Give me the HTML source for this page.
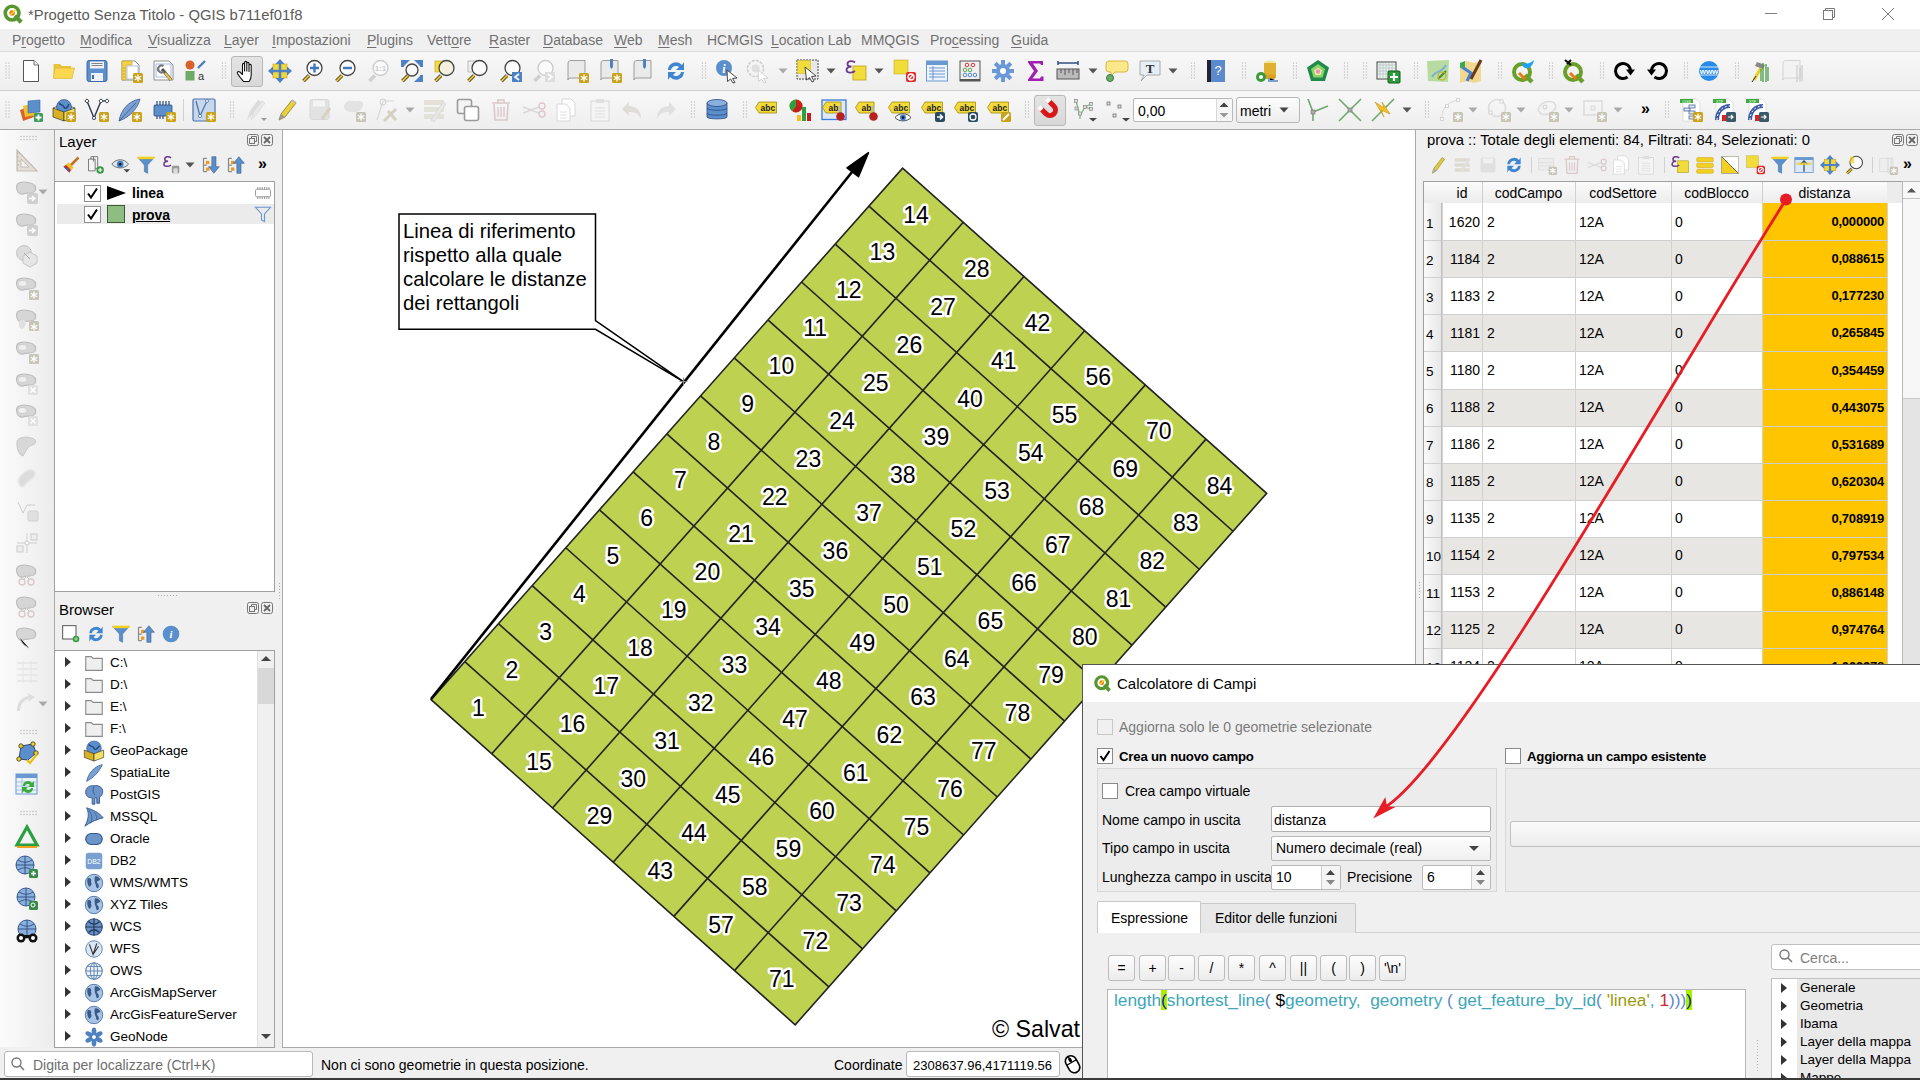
<!DOCTYPE html><html><head><meta charset="utf-8"><style>body{margin:0;width:1920px;height:1080px;position:relative;overflow:hidden;background:#f0f0f0;font-family:"Liberation Sans",sans-serif;font-size:14px}svg{overflow:visible}</style></head><body><div style="position:absolute;left:0px;top:0px;width:1920px;height:29px;background:#fff"></div><svg style="position:absolute;left:1.5px;top:3.0px" width="22" height="22" viewBox="0 0 24 24"><circle cx="11" cy="11" r="7.5" fill="none" stroke="#589632" stroke-width="4"/><path d="M14 14L21 21" stroke="#589632" stroke-width="4.5"/><circle cx="11" cy="11" r="3" fill="#ee7913"/><path d="M9 13L15 7" stroke="#f0e130" stroke-width="1.5"/></svg><div style="position:absolute;left:28px;top:8.47px;font-size:14.8px;line-height:14.8px;color:#5a5a5a;font-weight:400;white-space:pre;">*Progetto Senza Titolo - QGIS b711ef01f8</div><div style="position:absolute;left:1765px;top:13px;width:12px;height:1px;background:#808080"></div><svg style="position:absolute;left:1822px;top:7px" width="14" height="14"><rect x="1.5" y="3.5" width="9" height="9" fill="none" stroke="#7a7a7a"/><path d="M3.5 3.5V1.5H12.5V10.5H10.5" fill="none" stroke="#7a7a7a"/></svg><svg style="position:absolute;left:1881px;top:7px" width="14" height="14"><path d="M1 1L13 13M13 1L1 13" stroke="#7a7a7a" stroke-width="1"/></svg><div style="position:absolute;left:0px;top:29px;width:1920px;height:22px;background:#f0f0f0"></div><div style="position:absolute;left:0px;top:51px;width:1920px;height:1px;background:#dcdcdc"></div><div style="position:absolute;left:12px;top:32.65px;font-size:14px;line-height:14px;color:#707070;font-weight:400;white-space:pre;text-underline-offset:2px">P<u>r</u>ogetto</div><div style="position:absolute;left:80px;top:32.65px;font-size:14px;line-height:14px;color:#707070;font-weight:400;white-space:pre;text-underline-offset:2px"><u>M</u>odifica</div><div style="position:absolute;left:148px;top:32.65px;font-size:14px;line-height:14px;color:#707070;font-weight:400;white-space:pre;text-underline-offset:2px"><u>V</u>isualizza</div><div style="position:absolute;left:224px;top:32.65px;font-size:14px;line-height:14px;color:#707070;font-weight:400;white-space:pre;text-underline-offset:2px"><u>L</u>ayer</div><div style="position:absolute;left:272px;top:32.65px;font-size:14px;line-height:14px;color:#707070;font-weight:400;white-space:pre;text-underline-offset:2px"><u>I</u>mpostazioni</div><div style="position:absolute;left:367px;top:32.65px;font-size:14px;line-height:14px;color:#707070;font-weight:400;white-space:pre;text-underline-offset:2px"><u>P</u>lugins</div><div style="position:absolute;left:427px;top:32.65px;font-size:14px;line-height:14px;color:#707070;font-weight:400;white-space:pre;text-underline-offset:2px">Vett<u>o</u>re</div><div style="position:absolute;left:489px;top:32.65px;font-size:14px;line-height:14px;color:#707070;font-weight:400;white-space:pre;text-underline-offset:2px"><u>R</u>aster</div><div style="position:absolute;left:543px;top:32.65px;font-size:14px;line-height:14px;color:#707070;font-weight:400;white-space:pre;text-underline-offset:2px"><u>D</u>atabase</div><div style="position:absolute;left:614px;top:32.65px;font-size:14px;line-height:14px;color:#707070;font-weight:400;white-space:pre;text-underline-offset:2px"><u>W</u>eb</div><div style="position:absolute;left:658px;top:32.65px;font-size:14px;line-height:14px;color:#707070;font-weight:400;white-space:pre;text-underline-offset:2px"><u>M</u>esh</div><div style="position:absolute;left:707px;top:32.65px;font-size:14px;line-height:14px;color:#707070;font-weight:400;white-space:pre;text-underline-offset:2px">HCMGIS</div><div style="position:absolute;left:771px;top:32.65px;font-size:14px;line-height:14px;color:#707070;font-weight:400;white-space:pre;text-underline-offset:2px"><u>L</u>ocation Lab</div><div style="position:absolute;left:861px;top:32.65px;font-size:14px;line-height:14px;color:#707070;font-weight:400;white-space:pre;text-underline-offset:2px">MMQGIS</div><div style="position:absolute;left:930px;top:32.65px;font-size:14px;line-height:14px;color:#707070;font-weight:400;white-space:pre;text-underline-offset:2px">Pro<u>c</u>essing</div><div style="position:absolute;left:1011px;top:32.65px;font-size:14px;line-height:14px;color:#707070;font-weight:400;white-space:pre;text-underline-offset:2px"><u>G</u>uida</div><div style="position:absolute;left:0px;top:52px;width:1920px;height:38px;background:linear-gradient(#f8f8f8,#eeeeee)"></div><div style="position:absolute;left:0px;top:90px;width:1920px;height:1px;background:#d0d0d0"></div><div style="position:absolute;left:0px;top:91px;width:1920px;height:38px;background:linear-gradient(#f8f8f8,#eeeeee)"></div><div style="position:absolute;left:0px;top:129px;width:1920px;height:1px;background:#a9a9a9"></div><div style="position:absolute;left:0px;top:130px;width:54px;height:917px;background:linear-gradient(90deg,#fbfbfb,#ececec)"></div><div style="position:absolute;left:54px;top:130px;width:1px;height:917px;background:#a8a8a8"></div><div style="position:absolute;left:231px;top:56px;width:32px;height:31px;background:linear-gradient(#e4e4e4,#d8d8d8);border:1px solid #b8b8b8;border-radius:3px;box-sizing:border-box"></div><svg style="position:absolute;left:18.8px;top:59.0px" width="24" height="24" viewBox="0 0 24 24"><path d="M4.5 1.5H15L19.5 6V22.5H4.5Z" fill="#fff" stroke="#555" stroke-width="1"/><path d="M15 1.5V6H19.5" fill="#eee" stroke="#555" stroke-width="0.8"/></svg><svg style="position:absolute;left:51.5px;top:59.0px" width="24" height="24" viewBox="0 0 24 24"><path d="M1.5 5H8L10 7H19V19H1.5Z" fill="#e8c23a"/><path d="M3 9H22.5L20 19.5H1.5Z" fill="#fcd850" stroke="#d8b030" stroke-width="0.6"/></svg><svg style="position:absolute;left:85.0px;top:59.0px" width="24" height="24" viewBox="0 0 24 24"><rect x="2" y="1.5" width="20" height="21" rx="2" fill="#5d8fcc" stroke="#3d6aa5"/><rect x="5" y="2.5" width="14" height="7" fill="#eef2f8"/><path d="M6.5 4.5H17.5M6.5 6.5H17.5" stroke="#555" stroke-width="0.7"/><rect x="6" y="14" width="12" height="8" fill="#eef2f8"/><rect x="7" y="16" width="2" height="4" fill="#3d6aa5"/></svg><svg style="position:absolute;left:118.5px;top:59.0px" width="24" height="24" viewBox="0 0 24 24"><path d="M3 2H16L20 6V21H3Z" fill="#fff" stroke="#777" stroke-width="0.8"/><path d="M8 7H19V20H8Z" fill="#fff" stroke="#8eaadd" stroke-width="0.7"/><path d="M3 2H13V6H7V21H3Z" fill="#f4d24a" stroke="#c8a020" stroke-width="0.6"/><path d="M4 9H6M4 12H6M4 15H6M4 18H6" stroke="#b08a10" stroke-width="0.6"/><rect x="14" y="14" width="10" height="10" rx="1.5" fill="#c9a21c"/><path d="M19 15.5V22.5M15.8 17.2L22.2 20.8M15.8 20.8L22.2 17.2" stroke="#fff" stroke-width="1.3"/></svg><svg style="position:absolute;left:151.5px;top:59.0px" width="24" height="24" viewBox="0 0 24 24"><path d="M2 2H17L21 6V21H2Z" fill="#fff" stroke="#777" stroke-width="0.8"/><rect x="4" y="5" width="15" height="13" fill="none" stroke="#8eaadd" stroke-width="0.8"/><path d="M10 10L19 21" stroke="#555" stroke-width="3.2"/><path d="M13 14L19 21" stroke="#e8c040" stroke-width="2.2"/><path d="M11.5 7A3.5 3.5 0 1 0 12 12.5" fill="none" stroke="#777" stroke-width="2.2"/></svg><svg style="position:absolute;left:184.0px;top:59.0px" width="24" height="24" viewBox="0 0 24 24"><circle cx="6" cy="6" r="4.5" fill="#d8622a"/><path d="M14 9L21 2" stroke="#4f7fc0" stroke-width="2.4"/><rect x="1.5" y="12" width="9" height="9.5" fill="#6faa68"/><text x="17" y="21" font-size="11" text-anchor="middle" fill="#333" font-family="Liberation Sans">a</text></svg><svg style="position:absolute;left:235.0px;top:59.0px" width="24" height="24" viewBox="0 0 24 24"><path d="M8.5 22.5C6.5 20 3.5 16.5 2.5 14.5C1.8 13 3.5 11.8 4.8 13L7.5 15.5V5.5C7.5 4 9.6 4 9.6 5.5V12V3.5C9.6 2 11.8 2 11.8 3.5V12V4.5C11.8 3 14 3 14 4.5V12.5V6.5C14 5 16.2 5 16.2 6.5V16C16.2 19 15.2 21 14.2 22.5Z" fill="#fff" stroke="#111" stroke-width="1.1" stroke-linejoin="round"/></svg><svg style="position:absolute;left:268.0px;top:59.0px" width="24" height="24" viewBox="0 0 24 24"><rect x="5" y="5" width="14" height="14" fill="#f2d83a" stroke="#b8a020" stroke-width="0.6"/><g fill="#4f82c4"><path d="M12 0L16.5 5H7.5Z"/><path d="M12 24L16.5 19H7.5Z"/><path d="M0 12L5 7.5V16.5Z"/><path d="M24 12L19 7.5V16.5Z"/></g><path d="M12 4V20M4 12H20" stroke="#4f82c4" stroke-width="2.5"/></svg><svg style="position:absolute;left:301.0px;top:59.0px" width="24" height="24" viewBox="0 0 24 24"><path d="M2.5 22L8 16.5" stroke="#333" stroke-width="3.6"/><path d="M2.5 22L8 16.5" stroke="#e8c020" stroke-width="2"/><circle cx="13.5" cy="9" r="7.5" fill="#fafafa" stroke="#444" stroke-width="1.3"/><path d="M13.5 4.5V13.5M9 9H18" stroke="#3f78c0" stroke-width="2.4"/></svg><svg style="position:absolute;left:334.0px;top:59.0px" width="24" height="24" viewBox="0 0 24 24"><path d="M2.5 22L8 16.5" stroke="#333" stroke-width="3.6"/><path d="M2.5 22L8 16.5" stroke="#e8c020" stroke-width="2"/><circle cx="13.5" cy="9" r="7.5" fill="#fafafa" stroke="#444" stroke-width="1.3"/><path d="M9 9H18" stroke="#3f78c0" stroke-width="2.4"/></svg><svg style="position:absolute;left:367.0px;top:59.0px" width="24" height="24" viewBox="0 0 24 24"><path d="M2.5 22L8 16.5" stroke="#d0d0d0" stroke-width="3.6"/><circle cx="13.5" cy="9" r="7.5" fill="#fafafa" stroke="#ccc" stroke-width="1.3"/><text x="13.5" y="12" font-size="8" font-weight="700" text-anchor="middle" fill="#ccc" font-family="Liberation Sans">1:1</text></svg><svg style="position:absolute;left:400.0px;top:59.0px" width="24" height="24" viewBox="0 0 24 24"><g fill="#4f82c4"><path d="M3 1H10L3 8Z"/><path d="M21 1H14L21 8Z"/><path d="M21 23H14L21 16Z"/><rect x="1" y="1" width="3" height="7"/><rect x="20" y="1" width="3" height="7"/><rect x="20" y="16" width="3" height="7"/></g><path d="M2.5 22L8 16.5" stroke="#333" stroke-width="3.6"/><path d="M2.5 22L8 16.5" stroke="#e8c020" stroke-width="2"/><circle cx="12" cy="11" r="6" fill="#fafafa" stroke="#444" stroke-width="1.3"/></svg><svg style="position:absolute;left:433.0px;top:59.0px" width="24" height="24" viewBox="0 0 24 24"><rect x="2" y="2" width="9" height="11" fill="#f4dc3a" stroke="#b8a020" stroke-width="0.6"/><path d="M2.5 22L8 16.5" stroke="#333" stroke-width="3.6"/><path d="M2.5 22L8 16.5" stroke="#e8c020" stroke-width="2"/><circle cx="13.5" cy="9" r="7.5" fill="#f4f0e0" stroke="#444" stroke-width="1.3"/></svg><svg style="position:absolute;left:466.0px;top:59.0px" width="24" height="24" viewBox="0 0 24 24"><rect x="2" y="2" width="9" height="11" fill="#eee" stroke="#999" stroke-width="0.6"/><path d="M2.5 22L8 16.5" stroke="#333" stroke-width="3.6"/><path d="M2.5 22L8 16.5" stroke="#e8c020" stroke-width="2"/><circle cx="13.5" cy="9" r="7.5" fill="#fafafa" stroke="#444" stroke-width="1.3"/></svg><svg style="position:absolute;left:499.0px;top:59.0px" width="24" height="24" viewBox="0 0 24 24"><path d="M2.5 22L8 16.5" stroke="#333" stroke-width="3.6"/><path d="M2.5 22L8 16.5" stroke="#e8c020" stroke-width="2"/><circle cx="13.5" cy="9" r="7.5" fill="#fafafa" stroke="#444" stroke-width="1.3"/><rect x="13" y="13" width="10" height="10" fill="#4f82c4"/><path d="M20 15L16 18L20 21" fill="none" stroke="#fff" stroke-width="1.6"/></svg><svg style="position:absolute;left:532.0px;top:59.0px" width="24" height="24" viewBox="0 0 24 24"><path d="M2.5 22L8 16.5" stroke="#d0d0d0" stroke-width="3.6"/><circle cx="13.5" cy="9" r="7.5" fill="#fafafa" stroke="#ccc" stroke-width="1.3"/><rect x="13" y="13" width="10" height="10" fill="#ddd"/><path d="M16 15L20 18L16 21" fill="none" stroke="#fff" stroke-width="1.6"/></svg><svg style="position:absolute;left:565.0px;top:59.0px" width="24" height="24" viewBox="0 0 24 24"><path d="M3 4C3 2 5 1.5 6 1.5H20V19H6C4 19 3 20 3 21Z" fill="#eaeaea" stroke="#888" stroke-width="0.8"/><rect x="14" y="14" width="10" height="10" rx="1.5" fill="#c9a21c"/><path d="M19 15.5V22.5M15.8 17.2L22.2 20.8M15.8 20.8L22.2 17.2" stroke="#fff" stroke-width="1.3"/></svg><svg style="position:absolute;left:598.0px;top:59.0px" width="24" height="24" viewBox="0 0 24 24"><path d="M3 4C3 2 5 1.5 6 1.5H20V19H6C4 19 3 20 3 21Z" fill="#eaeaea" stroke="#888" stroke-width="0.8"/><path d="M12 0H15V8L13.5 10L12 8Z" fill="#4f82c4"/><rect x="14" y="14" width="10" height="10" rx="1.5" fill="#c9a21c"/><path d="M19 15.5V22.5M15.8 17.2L22.2 20.8M15.8 20.8L22.2 17.2" stroke="#fff" stroke-width="1.3"/></svg><svg style="position:absolute;left:631.0px;top:59.0px" width="24" height="24" viewBox="0 0 24 24"><path d="M3 4C3 2 5 1.5 6 1.5H20V19H6C4 19 3 20 3 21Z" fill="#eaeaea" stroke="#888" stroke-width="0.8"/><path d="M12 0H15V8L13.5 10L12 8Z" fill="#4f82c4"/></svg><svg style="position:absolute;left:664.0px;top:59.0px" width="24" height="24" viewBox="0 0 24 24"><path d="M4 11A8 8 0 0 1 18 6L20 3V11H12L15 8A5 5 0 0 0 7 11Z" fill="#3f86d0"/><path d="M20 13A8 8 0 0 1 6 18L4 21V13H12L9 16A5 5 0 0 0 17 13Z" fill="#3f86d0"/></svg><svg style="position:absolute;left:715.0px;top:59.0px" width="24" height="24" viewBox="0 0 24 24"><circle cx="9" cy="9" r="8" fill="#5b8fcc"/><text x="9" y="14" font-size="12" font-weight="700" font-style="italic" text-anchor="middle" fill="#fff" font-family="Liberation Serif">i</text><path d="M12 11L22 19L17.5 19.5L20 23.5L18 24L15.5 20L12.5 22.5Z" fill="#fff" stroke="#333" stroke-width="0.9"/></svg><svg style="position:absolute;left:746.0px;top:59.0px" width="24" height="24" viewBox="0 0 24 24"><circle cx="9.5" cy="9.5" r="8" fill="#f4f4f4" stroke="#ccc" stroke-width="1.5" stroke-dasharray="3 1.2"/><circle cx="9.5" cy="9.5" r="4" fill="#e0e0e0"/><path d="M12 11L22 19L17.5 19.5L20 23.5L18 24L15.5 20L12.5 22.5Z" fill="#fff" stroke="#ccc" stroke-width="0.9"/></svg><svg style="position:absolute;left:796.0px;top:59.0px" width="24" height="24" viewBox="0 0 24 24"><rect x="1" y="1" width="21" height="19" fill="#e8e8e8" stroke="#333" stroke-width="0.9" stroke-dasharray="2 1"/><rect x="1.5" y="1.5" width="13" height="13" fill="#f2dc3a" stroke="#c8b020" stroke-width="0.5"/><path d="M9 8L20 17L15.5 17.5L18 22L16 23L13.5 18.5L10.5 21Z" fill="#fff" stroke="#333" stroke-width="0.9"/></svg><svg style="position:absolute;left:844.0px;top:59.0px" width="24" height="24" viewBox="0 0 24 24"><rect x="9" y="7" width="13" height="14" fill="#f2dc3a" stroke="#b8a020" stroke-width="0.8"/><path d="M11 3.5C9 1.5 3.5 1.5 3.5 5C3.5 7 6 7.5 7.5 7.5C5 7.5 2.5 8.5 2.5 11C2.5 14 8 14.5 11 12" fill="none" stroke="#6a3a8a" stroke-width="1.8"/></svg><svg style="position:absolute;left:892.0px;top:59.0px" width="24" height="24" viewBox="0 0 24 24"><rect x="2" y="1" width="14" height="14" fill="#f2dc3a" stroke="#b8a020" stroke-width="0.5"/><rect x="14" y="13" width="10" height="10" rx="2" fill="#e02a2a"/><circle cx="19" cy="18" r="3" fill="none" stroke="#fff" stroke-width="1.3"/><path d="M17 20L21 16" stroke="#fff" stroke-width="1.3"/></svg><svg style="position:absolute;left:925.0px;top:59.0px" width="24" height="24" viewBox="0 0 24 24"><rect x="1.5" y="2" width="21" height="20" fill="#eef4fc" stroke="#6a98d0" stroke-width="1"/><rect x="1.5" y="2" width="21" height="4" fill="#6a98d0"/><path d="M4 9H20M4 12H20M4 15H20M4 18H20M8 7V21" stroke="#6a98d0" stroke-width="1"/></svg><svg style="position:absolute;left:958.0px;top:59.0px" width="24" height="24" viewBox="0 0 24 24"><rect x="2" y="2" width="20" height="20" fill="#f0f0f0" stroke="#555" stroke-width="1"/><path d="M2 21H22" stroke="#555" stroke-width="2"/><g fill="none" stroke-width="1"><circle cx="9" cy="6" r="1.8" stroke="#d33"/><circle cx="15" cy="6" r="1.8" stroke="#d33"/><circle cx="7" cy="11" r="1.8" stroke="#5a5"/><circle cx="12" cy="11" r="1.8" stroke="#5a5"/><circle cx="7" cy="16" r="1.8" stroke="#58c"/><circle cx="12" cy="16" r="1.8" stroke="#58c"/><circle cx="17" cy="16" r="1.8" stroke="#58c"/></g></svg><svg style="position:absolute;left:991.0px;top:59.0px" width="24" height="24" viewBox="0 0 24 24"><g fill="#6a98d8"><circle cx="12" cy="12" r="7"/><rect x="10" y="1" width="4" height="22"/><rect x="1" y="10" width="22" height="4"/><rect x="10" y="1" width="4" height="22" transform="rotate(45 12 12)"/><rect x="10" y="1" width="4" height="22" transform="rotate(-45 12 12)"/></g><circle cx="12" cy="12" r="3" fill="#fff"/></svg><svg style="position:absolute;left:1024.0px;top:59.0px" width="24" height="24" viewBox="0 0 24 24"><path d="M4 2H19V6H17L16 4.5H9L14 12L8.5 19.5H16L17 17.5H19.5V22H4V20.5L10 12L4 3.5Z" fill="#a020b0"/></svg><svg style="position:absolute;left:1056.0px;top:59.0px" width="24" height="24" viewBox="0 0 24 24"><path d="M2 4H22M2 2V6M22 2V6" stroke="#2f4f80" stroke-width="1.5"/><rect x="1" y="10" width="22" height="10" fill="#bbb" stroke="#555" stroke-width="1"/><path d="M5 10V14M9 10V16M13 10V14M17 10V16M21 10V14" stroke="#555" stroke-width="1"/></svg><svg style="position:absolute;left:1105.0px;top:59.0px" width="24" height="24" viewBox="0 0 24 24"><path d="M4 2H20Q23 2 23 5V10Q23 13 20 13H10L6 17V13H4Q1 13 1 10V5Q1 2 4 2Z" fill="#fbe88a" stroke="#d8b840" stroke-width="1"/><circle cx="5" cy="19" r="3.5" fill="#6aaa6a" stroke="#3a7a3a"/></svg><svg style="position:absolute;left:1138.0px;top:59.0px" width="24" height="24" viewBox="0 0 24 24"><path d="M2 2H22V16H9L3 22L6 16H2Z" fill="#e6eef6" stroke="#999" stroke-width="0.8"/><text x="12" y="13.5" font-size="13" font-weight="700" text-anchor="middle" fill="#333" font-family="Liberation Serif">T</text></svg><svg style="position:absolute;left:1204.0px;top:59.0px" width="24" height="24" viewBox="0 0 24 24"><rect x="3" y="1" width="18" height="22" fill="#5b8acc"/><rect x="3" y="1" width="4" height="22" fill="#223"/><text x="14" y="16" font-size="13" text-anchor="middle" fill="#fff" font-family="Liberation Sans">?</text></svg><svg style="position:absolute;left:1255.0px;top:59.0px" width="24" height="24" viewBox="0 0 24 24"><ellipse cx="15" cy="4" rx="6" ry="2.5" fill="#f4e8a0"/><rect x="9" y="4" width="12" height="14" fill="#e0b030"/><ellipse cx="15" cy="18" rx="6" ry="2.5" fill="#d8a020"/><path d="M14 19V22H23" stroke="#7aa0d0" stroke-width="2"/><circle cx="6" cy="18" r="5" fill="#3a9a3a"/><circle cx="6" cy="18" r="2" fill="#fff"/></svg><svg style="position:absolute;left:1306.0px;top:59.0px" width="24" height="24" viewBox="0 0 24 24"><path d="M12 1L23 8.5L19 22H5L1 8.5Z" fill="#1f8a4a"/><path d="M12 5L19 10L16.5 18.5H7.5L5 10Z" fill="#8ed06a"/><path d="M12 8.5L16 11.5L14.5 16H9.5L8 11.5Z" fill="#e8f0a0"/><circle cx="12" cy="12.5" r="2.2" fill="#e890c0"/></svg><svg style="position:absolute;left:1376.0px;top:59.0px" width="24" height="24" viewBox="0 0 24 24"><rect x="1" y="3" width="19" height="17" fill="#eaf4ea" stroke="#444" stroke-width="1"/><path d="M4 3V20M7 3V20M10 3V20M13 3V20M16 3V20M1 6H20M1 9H20M1 12H20M1 15H20" stroke="#9ab" stroke-width="0.5"/><rect x="12" y="12" width="12" height="12" rx="1" fill="#2a9a3a" stroke="#185a20"/><path d="M18 14V22M14 18H22" stroke="#fff" stroke-width="2.2"/></svg><svg style="position:absolute;left:1426.0px;top:59.0px" width="24" height="24" viewBox="0 0 24 24"><path d="M1 2L23 1L22 23L2 22Z" fill="#b8dca0"/><path d="M6 18C10 10 14 16 20 6" stroke="#7ab0d8" stroke-width="2" fill="none"/><path d="M12 20L20 12" stroke="#4a8a2a" stroke-width="2"/><circle cx="16" cy="17" r="4" fill="none" stroke="#c8b020" stroke-width="1.2"/></svg><svg style="position:absolute;left:1459.0px;top:59.0px" width="24" height="24" viewBox="0 0 24 24"><path d="M1 4L8 2L15 4L22 2V22L15 24L8 22L1 24Z" fill="#f0d890"/><path d="M3 8L12 14L8 22" stroke="#4a80d0" stroke-width="3" fill="none"/><path d="M1 4L6 2V8L1 9Z" fill="#3aaa50"/><path d="M12 20L22 1" stroke="#6a3a1a" stroke-width="3"/></svg><svg style="position:absolute;left:1511.0px;top:59.0px" width="24" height="24" viewBox="0 0 24 24"><circle cx="11" cy="13" r="8" fill="none" stroke="#6aa02a" stroke-width="4"/><path d="M14 16L21 23" stroke="#6aa02a" stroke-width="4.5"/><path d="M8 14L14 20" stroke="#ee7913" stroke-width="3"/><path d="M10 3C13 6 19 5 23 1C22 6 19 10 14 9C12 8 11 6 10 3Z" fill="#1da1f2"/></svg><svg style="position:absolute;left:1562.0px;top:59.0px" width="24" height="24" viewBox="0 0 24 24"><circle cx="11" cy="13" r="8" fill="none" stroke="#6aa02a" stroke-width="4"/><path d="M14 16L21 23" stroke="#6aa02a" stroke-width="4.5"/><path d="M8 14L14 20" stroke="#ee7913" stroke-width="3"/><path d="M3 1L9 6M5 5L9 1" stroke="#111" stroke-width="2.2"/></svg><svg style="position:absolute;left:1612.0px;top:59.0px" width="24" height="24" viewBox="0 0 24 24"><path d="M18.5 11.5A7.5 7.5 0 1 0 15.5 18" fill="none" stroke="#000" stroke-width="3"/><path d="M14 10.5H23L18.5 16.5Z" fill="#000"/></svg><svg style="position:absolute;left:1646.0px;top:59.0px" width="24" height="24" viewBox="0 0 24 24"><path d="M5.5 11.5A7.5 7.5 0 1 1 8.5 18" fill="none" stroke="#000" stroke-width="3"/><path d="M10 10.5H1L5.5 16.5Z" fill="#000"/></svg><svg style="position:absolute;left:1697.0px;top:59.0px" width="24" height="24" viewBox="0 0 24 24"><circle cx="12" cy="12" r="10" fill="#2a8ae8"/><path d="M2 8H22M2 16H22" stroke="#fff" stroke-width="0.8"/><text x="12" y="15" font-size="8" font-weight="700" text-anchor="middle" fill="#fff" font-family="Liberation Sans">www</text></svg><svg style="position:absolute;left:1748.0px;top:59.0px" width="24" height="24" viewBox="0 0 24 24"><path d="M6 21L14 7" stroke="#e8d020" stroke-width="3" /><path d="M8 17L4 23" stroke="#333" stroke-width="1"/><path d="M9 3L17 6L15 10L7 7Z" fill="#888"/><path d="M15 4V23M18 5V23M20 8V22M13 10V22" stroke="#4a9a4a" stroke-width="1.3"/></svg><svg style="position:absolute;left:1780.0px;top:59.0px" width="24" height="24" viewBox="0 0 24 24"><path d="M3 4C3 2 5 1.5 6 1.5H20V19H6C4 19 3 20 3 21Z" fill="#f2f2f2" stroke="#ccc" stroke-width="0.8"/><path d="M17 6V23M20 8V23M22 6V22" stroke="#ccc" stroke-width="1.2"/></svg><svg style="position:absolute;left:0;top:0" width="1" height="1"><g fill="#c0c0c0"><circle cx="6.0" cy="63" r="0.65"/><circle cx="9.0" cy="63" r="0.65"/><circle cx="6.0" cy="66" r="0.65"/><circle cx="9.0" cy="66" r="0.65"/><circle cx="6.0" cy="69" r="0.65"/><circle cx="9.0" cy="69" r="0.65"/><circle cx="6.0" cy="72" r="0.65"/><circle cx="9.0" cy="72" r="0.65"/><circle cx="6.0" cy="75" r="0.65"/><circle cx="9.0" cy="75" r="0.65"/><circle cx="6.0" cy="78" r="0.65"/><circle cx="9.0" cy="78" r="0.65"/></g></svg><svg style="position:absolute;left:0;top:0" width="1" height="1"><g fill="#c0c0c0"><circle cx="222.5" cy="63" r="0.65"/><circle cx="225.5" cy="63" r="0.65"/><circle cx="222.5" cy="66" r="0.65"/><circle cx="225.5" cy="66" r="0.65"/><circle cx="222.5" cy="69" r="0.65"/><circle cx="225.5" cy="69" r="0.65"/><circle cx="222.5" cy="72" r="0.65"/><circle cx="225.5" cy="72" r="0.65"/><circle cx="222.5" cy="75" r="0.65"/><circle cx="225.5" cy="75" r="0.65"/><circle cx="222.5" cy="78" r="0.65"/><circle cx="225.5" cy="78" r="0.65"/></g></svg><svg style="position:absolute;left:0;top:0" width="1" height="1"><g fill="#c0c0c0"><circle cx="702.5" cy="63" r="0.65"/><circle cx="705.5" cy="63" r="0.65"/><circle cx="702.5" cy="66" r="0.65"/><circle cx="705.5" cy="66" r="0.65"/><circle cx="702.5" cy="69" r="0.65"/><circle cx="705.5" cy="69" r="0.65"/><circle cx="702.5" cy="72" r="0.65"/><circle cx="705.5" cy="72" r="0.65"/><circle cx="702.5" cy="75" r="0.65"/><circle cx="705.5" cy="75" r="0.65"/><circle cx="702.5" cy="78" r="0.65"/><circle cx="705.5" cy="78" r="0.65"/></g></svg><svg style="position:absolute;left:0;top:0" width="1" height="1"><g fill="#c0c0c0"><circle cx="1191.5" cy="63" r="0.65"/><circle cx="1194.5" cy="63" r="0.65"/><circle cx="1191.5" cy="66" r="0.65"/><circle cx="1194.5" cy="66" r="0.65"/><circle cx="1191.5" cy="69" r="0.65"/><circle cx="1194.5" cy="69" r="0.65"/><circle cx="1191.5" cy="72" r="0.65"/><circle cx="1194.5" cy="72" r="0.65"/><circle cx="1191.5" cy="75" r="0.65"/><circle cx="1194.5" cy="75" r="0.65"/><circle cx="1191.5" cy="78" r="0.65"/><circle cx="1194.5" cy="78" r="0.65"/></g></svg><svg style="position:absolute;left:0;top:0" width="1" height="1"><g fill="#c0c0c0"><circle cx="1242.5" cy="63" r="0.65"/><circle cx="1245.5" cy="63" r="0.65"/><circle cx="1242.5" cy="66" r="0.65"/><circle cx="1245.5" cy="66" r="0.65"/><circle cx="1242.5" cy="69" r="0.65"/><circle cx="1245.5" cy="69" r="0.65"/><circle cx="1242.5" cy="72" r="0.65"/><circle cx="1245.5" cy="72" r="0.65"/><circle cx="1242.5" cy="75" r="0.65"/><circle cx="1245.5" cy="75" r="0.65"/><circle cx="1242.5" cy="78" r="0.65"/><circle cx="1245.5" cy="78" r="0.65"/></g></svg><svg style="position:absolute;left:0;top:0" width="1" height="1"><g fill="#c0c0c0"><circle cx="1293.5" cy="63" r="0.65"/><circle cx="1296.5" cy="63" r="0.65"/><circle cx="1293.5" cy="66" r="0.65"/><circle cx="1296.5" cy="66" r="0.65"/><circle cx="1293.5" cy="69" r="0.65"/><circle cx="1296.5" cy="69" r="0.65"/><circle cx="1293.5" cy="72" r="0.65"/><circle cx="1296.5" cy="72" r="0.65"/><circle cx="1293.5" cy="75" r="0.65"/><circle cx="1296.5" cy="75" r="0.65"/><circle cx="1293.5" cy="78" r="0.65"/><circle cx="1296.5" cy="78" r="0.65"/></g></svg><svg style="position:absolute;left:0;top:0" width="1" height="1"><g fill="#c0c0c0"><circle cx="1344.5" cy="63" r="0.65"/><circle cx="1347.5" cy="63" r="0.65"/><circle cx="1344.5" cy="66" r="0.65"/><circle cx="1347.5" cy="66" r="0.65"/><circle cx="1344.5" cy="69" r="0.65"/><circle cx="1347.5" cy="69" r="0.65"/><circle cx="1344.5" cy="72" r="0.65"/><circle cx="1347.5" cy="72" r="0.65"/><circle cx="1344.5" cy="75" r="0.65"/><circle cx="1347.5" cy="75" r="0.65"/><circle cx="1344.5" cy="78" r="0.65"/><circle cx="1347.5" cy="78" r="0.65"/></g></svg><svg style="position:absolute;left:0;top:0" width="1" height="1"><g fill="#c0c0c0"><circle cx="1363.5" cy="63" r="0.65"/><circle cx="1366.5" cy="63" r="0.65"/><circle cx="1363.5" cy="66" r="0.65"/><circle cx="1366.5" cy="66" r="0.65"/><circle cx="1363.5" cy="69" r="0.65"/><circle cx="1366.5" cy="69" r="0.65"/><circle cx="1363.5" cy="72" r="0.65"/><circle cx="1366.5" cy="72" r="0.65"/><circle cx="1363.5" cy="75" r="0.65"/><circle cx="1366.5" cy="75" r="0.65"/><circle cx="1363.5" cy="78" r="0.65"/><circle cx="1366.5" cy="78" r="0.65"/></g></svg><svg style="position:absolute;left:0;top:0" width="1" height="1"><g fill="#c0c0c0"><circle cx="1414.5" cy="63" r="0.65"/><circle cx="1417.5" cy="63" r="0.65"/><circle cx="1414.5" cy="66" r="0.65"/><circle cx="1417.5" cy="66" r="0.65"/><circle cx="1414.5" cy="69" r="0.65"/><circle cx="1417.5" cy="69" r="0.65"/><circle cx="1414.5" cy="72" r="0.65"/><circle cx="1417.5" cy="72" r="0.65"/><circle cx="1414.5" cy="75" r="0.65"/><circle cx="1417.5" cy="75" r="0.65"/><circle cx="1414.5" cy="78" r="0.65"/><circle cx="1417.5" cy="78" r="0.65"/></g></svg><svg style="position:absolute;left:0;top:0" width="1" height="1"><g fill="#c0c0c0"><circle cx="1498.5" cy="63" r="0.65"/><circle cx="1501.5" cy="63" r="0.65"/><circle cx="1498.5" cy="66" r="0.65"/><circle cx="1501.5" cy="66" r="0.65"/><circle cx="1498.5" cy="69" r="0.65"/><circle cx="1501.5" cy="69" r="0.65"/><circle cx="1498.5" cy="72" r="0.65"/><circle cx="1501.5" cy="72" r="0.65"/><circle cx="1498.5" cy="75" r="0.65"/><circle cx="1501.5" cy="75" r="0.65"/><circle cx="1498.5" cy="78" r="0.65"/><circle cx="1501.5" cy="78" r="0.65"/></g></svg><svg style="position:absolute;left:0;top:0" width="1" height="1"><g fill="#c0c0c0"><circle cx="1549.5" cy="63" r="0.65"/><circle cx="1552.5" cy="63" r="0.65"/><circle cx="1549.5" cy="66" r="0.65"/><circle cx="1552.5" cy="66" r="0.65"/><circle cx="1549.5" cy="69" r="0.65"/><circle cx="1552.5" cy="69" r="0.65"/><circle cx="1549.5" cy="72" r="0.65"/><circle cx="1552.5" cy="72" r="0.65"/><circle cx="1549.5" cy="75" r="0.65"/><circle cx="1552.5" cy="75" r="0.65"/><circle cx="1549.5" cy="78" r="0.65"/><circle cx="1552.5" cy="78" r="0.65"/></g></svg><svg style="position:absolute;left:0;top:0" width="1" height="1"><g fill="#c0c0c0"><circle cx="1600.5" cy="63" r="0.65"/><circle cx="1603.5" cy="63" r="0.65"/><circle cx="1600.5" cy="66" r="0.65"/><circle cx="1603.5" cy="66" r="0.65"/><circle cx="1600.5" cy="69" r="0.65"/><circle cx="1603.5" cy="69" r="0.65"/><circle cx="1600.5" cy="72" r="0.65"/><circle cx="1603.5" cy="72" r="0.65"/><circle cx="1600.5" cy="75" r="0.65"/><circle cx="1603.5" cy="75" r="0.65"/><circle cx="1600.5" cy="78" r="0.65"/><circle cx="1603.5" cy="78" r="0.65"/></g></svg><svg style="position:absolute;left:0;top:0" width="1" height="1"><g fill="#c0c0c0"><circle cx="1684.5" cy="63" r="0.65"/><circle cx="1687.5" cy="63" r="0.65"/><circle cx="1684.5" cy="66" r="0.65"/><circle cx="1687.5" cy="66" r="0.65"/><circle cx="1684.5" cy="69" r="0.65"/><circle cx="1687.5" cy="69" r="0.65"/><circle cx="1684.5" cy="72" r="0.65"/><circle cx="1687.5" cy="72" r="0.65"/><circle cx="1684.5" cy="75" r="0.65"/><circle cx="1687.5" cy="75" r="0.65"/><circle cx="1684.5" cy="78" r="0.65"/><circle cx="1687.5" cy="78" r="0.65"/></g></svg><svg style="position:absolute;left:0;top:0" width="1" height="1"><g fill="#c0c0c0"><circle cx="1735.5" cy="63" r="0.65"/><circle cx="1738.5" cy="63" r="0.65"/><circle cx="1735.5" cy="66" r="0.65"/><circle cx="1738.5" cy="66" r="0.65"/><circle cx="1735.5" cy="69" r="0.65"/><circle cx="1738.5" cy="69" r="0.65"/><circle cx="1735.5" cy="72" r="0.65"/><circle cx="1738.5" cy="72" r="0.65"/><circle cx="1735.5" cy="75" r="0.65"/><circle cx="1738.5" cy="75" r="0.65"/><circle cx="1735.5" cy="78" r="0.65"/><circle cx="1738.5" cy="78" r="0.65"/></g></svg><svg style="position:absolute;left:778px;top:68px" width="10" height="6"><path d="M0.5 0.5H9.5L5 5.5Z" fill="#aaa"/></svg><svg style="position:absolute;left:826px;top:68px" width="10" height="6"><path d="M0.5 0.5H9.5L5 5.5Z" fill="#555"/></svg><svg style="position:absolute;left:874px;top:68px" width="10" height="6"><path d="M0.5 0.5H9.5L5 5.5Z" fill="#555"/></svg><svg style="position:absolute;left:1087.5px;top:68px" width="10" height="6"><path d="M0.5 0.5H9.5L5 5.5Z" fill="#555"/></svg><svg style="position:absolute;left:1168px;top:68px" width="10" height="6"><path d="M0.5 0.5H9.5L5 5.5Z" fill="#555"/></svg><div style="position:absolute;left:1034px;top:95px;width:32px;height:31px;background:linear-gradient(#e4e4e4,#d8d8d8);border:1px solid #b8b8b8;border-radius:3px;box-sizing:border-box"></div><svg style="position:absolute;left:19.0px;top:98.0px" width="24" height="24" viewBox="0 0 24 24"><path d="M1 12L12 8L15 19L4 23Z" fill="#d8622a"/><path d="M4 8L15 5L17 17L6 19Z" fill="#f2c030"/><path d="M9 3L21 2L21 14L9 15Z" fill="#5b8fcc" stroke="#3a6aa0" stroke-width="0.6"/><rect x="15" y="15" width="9" height="9" rx="1.5" fill="#3a9a5a"/><path d="M19.5 16.5V22.5M16.5 19.5H22.5" stroke="#fff" stroke-width="1.8"/></svg><svg style="position:absolute;left:52.0px;top:98.0px" width="24" height="24" viewBox="0 0 24 24"><circle cx="12" cy="9" r="7.5" fill="#5b8fcc" stroke="#2a4a80" stroke-width="0.6"/><path d="M7 5C9 8 11 6 12 9C13 12 16 9 17 6" stroke="#2a4a80" stroke-width="1.6" fill="none"/><path d="M1 10L12 14V23L1 19Z" fill="#d8b020" stroke="#333" stroke-width="0.7"/><path d="M12 14L23 10V19L12 23Z" fill="#f4e060" stroke="#333" stroke-width="0.7"/><path d="M1 10L5 8.5M23 10L19 8.5" stroke="#333" stroke-width="0.7"/><rect x="14" y="14" width="10" height="10" rx="1.5" fill="#c9a21c"/><path d="M19 15.5V22.5M15.8 17.2L22.2 20.8M15.8 20.8L22.2 17.2" stroke="#fff" stroke-width="1.3"/></svg><svg style="position:absolute;left:85.0px;top:98.0px" width="24" height="24" viewBox="0 0 24 24"><path d="M2 3L9 20L16 3" fill="none" stroke="#2a3a4a" stroke-width="1.4"/><path d="M16 3H22" stroke="#2a3a4a" stroke-width="1.2"/><g fill="#fff" stroke="#2a3a4a" stroke-width="0.9"><rect x="0.5" y="1.5" width="3" height="3" transform="rotate(45 2 3)"/><rect x="14.5" y="1.5" width="3" height="3" transform="rotate(45 16 3)"/><rect x="20.5" y="1.5" width="3" height="3" transform="rotate(45 22 3)"/><circle cx="9" cy="20" r="1.6"/></g><rect x="14" y="14" width="10" height="10" rx="1.5" fill="#c9a21c"/><path d="M19 15.5V22.5M15.8 17.2L22.2 20.8M15.8 20.8L22.2 17.2" stroke="#fff" stroke-width="1.3"/></svg><svg style="position:absolute;left:118.0px;top:98.0px" width="24" height="24" viewBox="0 0 24 24"><path d="M1 23C3 12 10 3 22 1C20 10 12 19 1 23Z" fill="#7aa0d0" stroke="#3a5a90" stroke-width="0.8"/><path d="M1 23L18 5" stroke="#3a5a90" stroke-width="0.8"/><rect x="14" y="14" width="10" height="10" rx="1.5" fill="#c9a21c"/><path d="M19 15.5V22.5M15.8 17.2L22.2 20.8M15.8 20.8L22.2 17.2" stroke="#fff" stroke-width="1.3"/></svg><svg style="position:absolute;left:152.0px;top:98.0px" width="24" height="24" viewBox="0 0 24 24"><rect x="2" y="7" width="18" height="11" rx="1" fill="#5b8fcc" stroke="#2a4a80" stroke-width="0.8"/><path d="M5 3V7M8 3V7M11 3V7M14 3V7M17 3V7M5 18V21M8 18V21M11 18V21" stroke="#2a4a80" stroke-width="1.2"/><rect x="14" y="14" width="10" height="10" rx="1.5" fill="#c9a21c"/><path d="M19 15.5V22.5M15.8 17.2L22.2 20.8M15.8 20.8L22.2 17.2" stroke="#fff" stroke-width="1.3"/></svg><svg style="position:absolute;left:192.0px;top:98.0px" width="24" height="24" viewBox="0 0 24 24"><rect x="1" y="1" width="22" height="22" rx="1.5" fill="#c8d8ec" stroke="#4a70a8" stroke-width="1.2"/><path d="M4 3L8 18L15 3" fill="none" stroke="#4a70a8" stroke-width="1.2"/><g fill="#fff" stroke="#4a70a8" stroke-width="0.8"><circle cx="8" cy="18" r="1.6"/><circle cx="15" cy="3" r="1.5"/></g><rect x="14" y="14" width="10" height="10" rx="1.5" fill="#c9a21c"/><path d="M19 15.5V22.5M15.8 17.2L22.2 20.8M15.8 20.8L22.2 17.2" stroke="#fff" stroke-width="1.3"/></svg><svg style="position:absolute;left:244.0px;top:98.0px" width="24" height="24" viewBox="0 0 24 24"><path d="M3 22L6 13L14 2L18 4L10 15Z" fill="#dcdcdc"/><path d="M7 22L10 13L18 3L21 5L13 16Z" fill="#e8e8e8" stroke="#d0d0d0" stroke-width="0.5"/><path d="M17 20H23L20 23Z" fill="#999"/></svg><svg style="position:absolute;left:275.0px;top:98.0px" width="24" height="24" viewBox="0 0 24 24"><path d="M4 22L6 16L17 2L21 5L10 19Z" fill="#e8d040" stroke="#8a7a20" stroke-width="0.8"/><path d="M4 22L6 16L10 19Z" fill="#999"/><path d="M17 2L21 5" stroke="#bbb" stroke-width="2"/></svg><svg style="position:absolute;left:308.0px;top:98.0px" width="24" height="24" viewBox="0 0 24 24"><rect x="2" y="1.5" width="19" height="20" rx="2" fill="#e2e2e2" stroke="#d8d8d8"/><rect x="5" y="2.5" width="12" height="6" fill="#f4f4f4"/><path d="M14 21L22 10" stroke="#d8d0c0" stroke-width="3"/></svg><svg style="position:absolute;left:342.0px;top:98.0px" width="24" height="24" viewBox="0 0 24 24"><path d="M3 6C6 1 12 4 17 3C23 3 22 9 18 12C15 15 8 15 5 13C2 11 1 8 3 6Z" fill="#e2e2e2"/><rect x="14" y="14" width="10" height="10" rx="1.5" fill="#c8c4b8"/><path d="M19 15.5V22.5M15.8 17.2L22.2 20.8M15.8 20.8L22.2 17.2" stroke="#fff" stroke-width="1.3"/></svg><svg style="position:absolute;left:374.0px;top:98.0px" width="24" height="24" viewBox="0 0 24 24"><path d="M3 22L9 3M9 3H20" stroke="#d8d8d8" stroke-width="1.2"/><circle cx="9" cy="4" r="3" fill="none" stroke="#d0d0d0"/><path d="M10 23L22 11M14 13L22 22" stroke="#d4d0c4" stroke-width="3"/></svg><svg style="position:absolute;left:423.0px;top:98.0px" width="24" height="24" viewBox="0 0 24 24"><rect x="1" y="2" width="20" height="5" fill="#e4e2d8"/><rect x="1" y="9" width="20" height="5" fill="#e4e2d8"/><rect x="1" y="16" width="20" height="5" fill="#e4e2d8"/><path d="M8 22L20 4L23 6L11 24Z" fill="#e8e8e8" stroke="#d0d0d0" stroke-width="0.6"/></svg><svg style="position:absolute;left:456.0px;top:98.0px" width="24" height="24" viewBox="0 0 24 24"><rect x="1.5" y="1.5" width="14" height="14" rx="2" fill="none" stroke="#9a9a9a" stroke-width="1.6"/><rect x="8.5" y="8.5" width="14" height="14" rx="2" fill="#fff" stroke="#9a9a9a" stroke-width="1.6"/></svg><svg style="position:absolute;left:489.0px;top:98.0px" width="24" height="24" viewBox="0 0 24 24"><path d="M3 5H21M9 5V2H15V5" stroke="#dcc8c8" stroke-width="1.6" fill="none"/><path d="M5 6L6 22H18L19 6" fill="none" stroke="#dcc8c8" stroke-width="1.6"/><path d="M9 9V19M12 9V19M15 9V19" stroke="#dcc8c8" stroke-width="1.4"/></svg><svg style="position:absolute;left:522.0px;top:98.0px" width="24" height="24" viewBox="0 0 24 24"><path d="M1 9L17 15M1 15L17 9" stroke="#d8d8d8" stroke-width="1.4"/><circle cx="20" cy="8" r="3" fill="none" stroke="#dcc8c8" stroke-width="1.4"/><circle cx="20" cy="16" r="3" fill="none" stroke="#dcc8c8" stroke-width="1.4"/></svg><svg style="position:absolute;left:554.0px;top:98.0px" width="24" height="24" viewBox="0 0 24 24"><path d="M8 1H17L21 5V18H8Z" fill="#fff" stroke="#d8d8d8"/><path d="M3 6H12L16 10V23H3Z" fill="#fff" stroke="#d8d8d8"/><path d="M6 14H13M6 17H13M6 20H13" stroke="#e0e0e0"/></svg><svg style="position:absolute;left:588.0px;top:98.0px" width="24" height="24" viewBox="0 0 24 24"><rect x="3" y="3" width="18" height="20" fill="#f4f4f4" stroke="#d8d8d8"/><rect x="8" y="1" width="8" height="4" fill="#e0e0e0"/><path d="M7 10H17M7 13H17M7 16H17M7 19H17" stroke="#e0e0e0"/></svg><svg style="position:absolute;left:620.0px;top:98.0px" width="24" height="24" viewBox="0 0 24 24"><path d="M9 4L2 11L9 18V14C15 14 18 15 21 21C21 13 17 8 9 8Z" fill="#e0dcd6"/></svg><svg style="position:absolute;left:654.0px;top:98.0px" width="24" height="24" viewBox="0 0 24 24"><path d="M15 4L22 11L15 18V14C9 14 6 15 3 21C3 13 7 8 15 8Z" fill="#e0e0e0"/></svg><svg style="position:absolute;left:705.0px;top:98.0px" width="24" height="24" viewBox="0 0 24 24"><path d="M2 5V19C2 21.5 22 21.5 22 19V5Z" fill="#5b8fcc" stroke="#2a4a80" stroke-width="0.8"/><ellipse cx="12" cy="5" rx="10" ry="3.5" fill="#8ab0e0" stroke="#2a4a80" stroke-width="0.8"/><path d="M2 10C2 13 22 13 22 10M2 15C2 18 22 18 22 15" stroke="#2a4a80" stroke-width="0.8" fill="none"/></svg><svg style="position:absolute;left:755.0px;top:98.0px" width="24" height="24" viewBox="0 0 24 24"><path d="M0.5 9.5L4 4H21.5V15H4Z" fill="#f2da3a" stroke="#a08a10" stroke-width="0.8"/><text x="12.8" y="13" font-size="8.5" font-weight="700" text-anchor="middle" fill="#222" font-family="Liberation Sans">abc</text></svg><svg style="position:absolute;left:789.0px;top:98.0px" width="24" height="24" viewBox="0 0 24 24"><circle cx="7" cy="8" r="6.5" fill="#e8c020"/><path d="M7 8V1.5A6.5 6.5 0 0 1 13.5 8Z" fill="#d02020"/><path d="M7 8L13.5 8A6.5 6.5 0 0 1 3 13Z" fill="#c02020"/><path d="M7 8L3 13A6.5 6.5 0 0 1 0.5 8 6.5 6.5 0 0 1 7 1.5Z" fill="#2aa040"/><rect x="8" y="17" width="4" height="6" fill="#f2c020"/><rect x="13" y="9" width="4" height="14" fill="#2aa040"/><rect x="18" y="15" width="4" height="8" fill="#c02020"/></svg><svg style="position:absolute;left:822.0px;top:98.0px" width="24" height="24" viewBox="0 0 24 24"><rect x="0" y="2" width="24" height="19.5" fill="#dde8f8" stroke="#3a7ae0" stroke-width="1.3"/><path d="M0.5 9.5L4 4H19V15H4Z" fill="#f2da3a" stroke="#a08a10" stroke-width="0.8"/><text x="11.5" y="13" font-size="8.5" font-weight="700" text-anchor="middle" fill="#222" font-family="Liberation Sans">ab</text><path d="M17 8V15" stroke="#bbb" stroke-width="2"/><circle cx="18.5" cy="18.5" r="4.3" fill="#b82020"/></svg><svg style="position:absolute;left:855.0px;top:98.0px" width="24" height="24" viewBox="0 0 24 24"><path d="M0.5 9.5L4 4H19V15H4Z" fill="#f2da3a" stroke="#a08a10" stroke-width="0.8"/><text x="11.5" y="13" font-size="8.5" font-weight="700" text-anchor="middle" fill="#222" font-family="Liberation Sans">ab</text><path d="M17 8V15" stroke="#bbb" stroke-width="2"/><circle cx="18.5" cy="18.5" r="4.3" fill="#b82020"/></svg><svg style="position:absolute;left:888.0px;top:98.0px" width="24" height="24" viewBox="0 0 24 24"><path d="M0.5 9.5L4 4H21.5V15H4Z" fill="#f2da3a" stroke="#a08a10" stroke-width="0.8"/><text x="12.8" y="13" font-size="8.5" font-weight="700" text-anchor="middle" fill="#222" font-family="Liberation Sans">abc</text><path d="M7 19.5C11 14.5 19 14.5 23 19.5C19 24 11 24 7 19.5Z" fill="#fff" stroke="#333" stroke-width="0.9"/><circle cx="15" cy="19.5" r="3" fill="#3a7ad0"/><circle cx="15" cy="19.5" r="1.2" fill="#111"/></svg><svg style="position:absolute;left:921.0px;top:98.0px" width="24" height="24" viewBox="0 0 24 24"><path d="M0.5 9.5L4 4H21.5V15H4Z" fill="#f2da3a" stroke="#a08a10" stroke-width="0.8"/><text x="12.8" y="13" font-size="8.5" font-weight="700" text-anchor="middle" fill="#222" font-family="Liberation Sans">abc</text><rect x="14" y="14" width="10" height="10" rx="2" fill="#2a4a60"/><path d="M16 19H21M19 16.5L21.5 19L19 21.5" stroke="#fff" stroke-width="1.5" fill="none"/></svg><svg style="position:absolute;left:954.0px;top:98.0px" width="24" height="24" viewBox="0 0 24 24"><path d="M0.5 9.5L4 4H21.5V15H4Z" fill="#f2da3a" stroke="#a08a10" stroke-width="0.8"/><text x="12.8" y="13" font-size="8.5" font-weight="700" text-anchor="middle" fill="#222" font-family="Liberation Sans">abc</text><rect x="14" y="14" width="10" height="10" rx="2" fill="#2a4a60"/><circle cx="19" cy="19" r="3" fill="none" stroke="#fff" stroke-width="1.3"/></svg><svg style="position:absolute;left:987.0px;top:98.0px" width="24" height="24" viewBox="0 0 24 24"><path d="M0.5 9.5L4 4H21.5V15H4Z" fill="#f2da3a" stroke="#a08a10" stroke-width="0.8"/><text x="12.8" y="13" font-size="8.5" font-weight="700" text-anchor="middle" fill="#222" font-family="Liberation Sans">abc</text><rect x="14" y="14" width="10" height="10" rx="1.5" fill="#c9a21c"/><path d="M16 22L22 16" stroke="#fff" stroke-width="1.8"/></svg><svg style="position:absolute;left:1038.0px;top:98.0px" width="24" height="24" viewBox="0 0 24 24"><g transform="rotate(-45 12 12)"><path d="M6.5 3V12A5.5 5.5 0 0 0 17.5 12V3" fill="none" stroke="#d81818" stroke-width="5"/><rect x="4" y="2" width="5" height="4" fill="#fff"/><rect x="15" y="2" width="5" height="4" fill="#fff"/></g></svg><svg style="position:absolute;left:1073.0px;top:98.0px" width="24" height="24" viewBox="0 0 24 24"><path d="M3 3L7 18L12 9L18 6M12 9L18 11M7 18V21" stroke="#7ab87a" stroke-width="1.2" fill="none"/><g fill="#ddd" stroke="#888" stroke-width="0.7"><rect x="1.5" y="1.5" width="3" height="3"/><rect x="2" y="9" width="3" height="3"/><rect x="5.5" y="14" width="3" height="3"/><rect x="10.5" y="7.5" width="3" height="3"/><rect x="16.5" y="4.5" width="3" height="3"/><rect x="16.5" y="9.5" width="3" height="3"/></g><path d="M16 20H24L20 23.5Z" fill="#444"/></svg><svg style="position:absolute;left:1106.0px;top:98.0px" width="24" height="24" viewBox="0 0 24 24"><g fill="#ddd" stroke="#666" stroke-width="0.7"><rect x="1" y="4" width="3" height="3"/><rect x="12" y="7" width="3" height="3"/><rect x="7" y="16" width="3" height="3"/></g><path d="M16 20H24L20 23.5Z" fill="#444"/></svg><svg style="position:absolute;left:1306.0px;top:98.0px" width="24" height="24" viewBox="0 0 24 24"><path d="M7 14L2 1M7 14L22 8M7 14V23" stroke="#6aaa6a" stroke-width="1.6"/><rect x="5" y="12" width="4" height="4" fill="#aaa" stroke="#777" stroke-width="0.6"/></svg><svg style="position:absolute;left:1338.0px;top:98.0px" width="24" height="24" viewBox="0 0 24 24"><path d="M1 23L23 1M1 1L23 23" stroke="#6aaa6a" stroke-width="1.6"/><rect x="10" y="10" width="4" height="4" fill="#aaa" stroke="#777" stroke-width="0.6"/></svg><svg style="position:absolute;left:1371.0px;top:98.0px" width="24" height="24" viewBox="0 0 24 24"><path d="M1 23L23 1" stroke="#6aaa6a" stroke-width="1.6"/><path d="M4 4L13 10L11 4L19 16L10 12L13 19Z" fill="#f2c020" stroke="#c89010" stroke-width="0.6"/></svg><svg style="position:absolute;left:1439.0px;top:98.0px" width="24" height="24" viewBox="0 0 24 24"><path d="M3 20C3 10 8 4 19 2" stroke="#ddd" stroke-width="1.2" fill="none"/><g fill="#fff" stroke="#ccc" stroke-width="0.8"><rect x="1.5" y="19.5" width="3" height="3"/><rect x="6.5" y="6.5" width="3" height="3"/><rect x="17.5" y="0.5" width="3" height="3"/></g><rect x="14" y="14" width="10" height="10" rx="1.5" fill="#c8c4b8"/><path d="M19 15.5V22.5M15.8 17.2L22.2 20.8M15.8 20.8L22.2 17.2" stroke="#fff" stroke-width="1.3"/></svg><svg style="position:absolute;left:1487.0px;top:98.0px" width="24" height="24" viewBox="0 0 24 24"><circle cx="10" cy="10" r="8.5" fill="none" stroke="#ddd" stroke-width="1.6"/><g fill="#fff" stroke="#ccc" stroke-width="0.8"><rect x="2" y="13" width="3" height="3"/><rect x="13" y="2" width="3" height="3"/></g><rect x="14" y="14" width="10" height="10" rx="1.5" fill="#c8c4b8"/><path d="M19 15.5V22.5M15.8 17.2L22.2 20.8M15.8 20.8L22.2 17.2" stroke="#fff" stroke-width="1.3"/></svg><svg style="position:absolute;left:1535.0px;top:98.0px" width="24" height="24" viewBox="0 0 24 24"><ellipse cx="12" cy="10" rx="9" ry="6" fill="none" stroke="#ddd" stroke-width="1.6" transform="rotate(-20 12 10)"/><circle cx="10" cy="9" r="2" fill="none" stroke="#ccc"/><rect x="14" y="14" width="10" height="10" rx="1.5" fill="#c8c4b8"/><path d="M19 15.5V22.5M15.8 17.2L22.2 20.8M15.8 20.8L22.2 17.2" stroke="#fff" stroke-width="1.3"/></svg><svg style="position:absolute;left:1583.0px;top:98.0px" width="24" height="24" viewBox="0 0 24 24"><rect x="1" y="3" width="18" height="14" fill="none" stroke="#ddd" stroke-width="1.6"/><rect x="8" y="8" width="4" height="4" fill="#eee" stroke="#ccc" stroke-width="0.6"/><rect x="14" y="14" width="10" height="10" rx="1.5" fill="#c8c4b8"/><path d="M19 15.5V22.5M15.8 17.2L22.2 20.8M15.8 20.8L22.2 17.2" stroke="#fff" stroke-width="1.3"/></svg><svg style="position:absolute;left:1679.0px;top:98.0px" width="24" height="24" viewBox="0 0 24 24"><path d="M4 1H17L21 5V23H4Z" fill="#fff" stroke="#ccc" stroke-width="0.6"/><rect x="1" y="1" width="13" height="4" fill="#3aaa3a"/><text x="7.5" y="4.5" font-size="3.8" text-anchor="middle" fill="#fff" font-family="Liberation Sans">QGS</text><g fill="#dde8f4" stroke="#4a6a9a" stroke-width="0.8"><rect x="5" y="10" width="6" height="3"/><rect x="10" y="7" width="6" height="3"/><rect x="10" y="13" width="6" height="3"/><rect x="10" y="18" width="6" height="3"/></g><rect x="14" y="14" width="10" height="10" rx="1.5" fill="#c9a21c"/><path d="M19 15.5V22.5M15.8 17.2L22.2 20.8M15.8 20.8L22.2 17.2" stroke="#fff" stroke-width="1.3"/></svg><svg style="position:absolute;left:1712.0px;top:98.0px" width="24" height="24" viewBox="0 0 24 24"><path d="M4 1H17L21 5V23H4Z" fill="#fff" stroke="#ccc" stroke-width="0.6"/><rect x="1" y="1" width="13" height="4" fill="#3aaa3a"/><text x="7.5" y="4.5" font-size="3.8" text-anchor="middle" fill="#fff" font-family="Liberation Sans">XTF</text><path d="M5 22C5 14 10 8 18 8" stroke="#3a5aa8" stroke-width="4" fill="none"/><path d="M5 22C5 14 10 8 18 8" stroke="#fff" stroke-width="1" stroke-dasharray="2 2" fill="none"/><rect x="10" y="17" width="5" height="6" fill="#e02020"/><rect x="14" y="14" width="10" height="10" rx="1.5" fill="#3a5a6a"/><path d="M16 19H21M19 17L21 19L19 21" stroke="#fff" stroke-width="1.2" fill="none"/></svg><svg style="position:absolute;left:1745.0px;top:98.0px" width="24" height="24" viewBox="0 0 24 24"><path d="M4 1H17L21 5V23H4Z" fill="#fff" stroke="#ccc" stroke-width="0.6"/><rect x="1" y="1" width="13" height="4" fill="#3aaa3a"/><text x="7.5" y="4.5" font-size="3.8" text-anchor="middle" fill="#fff" font-family="Liberation Sans">XTF</text><path d="M5 22C5 14 10 8 18 8" stroke="#3a5aa8" stroke-width="4" fill="none"/><path d="M5 22C5 14 10 8 18 8" stroke="#fff" stroke-width="1" stroke-dasharray="2 2" fill="none"/><rect x="10" y="17" width="5" height="6" fill="#e02020"/><rect x="14" y="14" width="10" height="10" rx="1.5" fill="#3a5a6a"/><path d="M16 19H21M19 17L21 19L19 21" stroke="#fff" stroke-width="1.2" fill="none"/></svg><div style="position:absolute;left:183px;top:99px;width:1px;height:22px;background:#d0d0d0"></div><svg style="position:absolute;left:0;top:0" width="1" height="1"><g fill="#c0c0c0"><circle cx="6.0" cy="102" r="0.65"/><circle cx="9.0" cy="102" r="0.65"/><circle cx="6.0" cy="105" r="0.65"/><circle cx="9.0" cy="105" r="0.65"/><circle cx="6.0" cy="108" r="0.65"/><circle cx="9.0" cy="108" r="0.65"/><circle cx="6.0" cy="111" r="0.65"/><circle cx="9.0" cy="111" r="0.65"/><circle cx="6.0" cy="114" r="0.65"/><circle cx="9.0" cy="114" r="0.65"/><circle cx="6.0" cy="117" r="0.65"/><circle cx="9.0" cy="117" r="0.65"/></g></svg><svg style="position:absolute;left:0;top:0" width="1" height="1"><g fill="#c0c0c0"><circle cx="230.5" cy="102" r="0.65"/><circle cx="233.5" cy="102" r="0.65"/><circle cx="230.5" cy="105" r="0.65"/><circle cx="233.5" cy="105" r="0.65"/><circle cx="230.5" cy="108" r="0.65"/><circle cx="233.5" cy="108" r="0.65"/><circle cx="230.5" cy="111" r="0.65"/><circle cx="233.5" cy="111" r="0.65"/><circle cx="230.5" cy="114" r="0.65"/><circle cx="233.5" cy="114" r="0.65"/><circle cx="230.5" cy="117" r="0.65"/><circle cx="233.5" cy="117" r="0.65"/></g></svg><svg style="position:absolute;left:0;top:0" width="1" height="1"><g fill="#c0c0c0"><circle cx="691.5" cy="102" r="0.65"/><circle cx="694.5" cy="102" r="0.65"/><circle cx="691.5" cy="105" r="0.65"/><circle cx="694.5" cy="105" r="0.65"/><circle cx="691.5" cy="108" r="0.65"/><circle cx="694.5" cy="108" r="0.65"/><circle cx="691.5" cy="111" r="0.65"/><circle cx="694.5" cy="111" r="0.65"/><circle cx="691.5" cy="114" r="0.65"/><circle cx="694.5" cy="114" r="0.65"/><circle cx="691.5" cy="117" r="0.65"/><circle cx="694.5" cy="117" r="0.65"/></g></svg><svg style="position:absolute;left:0;top:0" width="1" height="1"><g fill="#c0c0c0"><circle cx="743.5" cy="102" r="0.65"/><circle cx="746.5" cy="102" r="0.65"/><circle cx="743.5" cy="105" r="0.65"/><circle cx="746.5" cy="105" r="0.65"/><circle cx="743.5" cy="108" r="0.65"/><circle cx="746.5" cy="108" r="0.65"/><circle cx="743.5" cy="111" r="0.65"/><circle cx="746.5" cy="111" r="0.65"/><circle cx="743.5" cy="114" r="0.65"/><circle cx="746.5" cy="114" r="0.65"/><circle cx="743.5" cy="117" r="0.65"/><circle cx="746.5" cy="117" r="0.65"/></g></svg><svg style="position:absolute;left:0;top:0" width="1" height="1"><g fill="#c0c0c0"><circle cx="1025.5" cy="102" r="0.65"/><circle cx="1028.5" cy="102" r="0.65"/><circle cx="1025.5" cy="105" r="0.65"/><circle cx="1028.5" cy="105" r="0.65"/><circle cx="1025.5" cy="108" r="0.65"/><circle cx="1028.5" cy="108" r="0.65"/><circle cx="1025.5" cy="111" r="0.65"/><circle cx="1028.5" cy="111" r="0.65"/><circle cx="1025.5" cy="114" r="0.65"/><circle cx="1028.5" cy="114" r="0.65"/><circle cx="1025.5" cy="117" r="0.65"/><circle cx="1028.5" cy="117" r="0.65"/></g></svg><svg style="position:absolute;left:0;top:0" width="1" height="1"><g fill="#c0c0c0"><circle cx="1425.5" cy="102" r="0.65"/><circle cx="1428.5" cy="102" r="0.65"/><circle cx="1425.5" cy="105" r="0.65"/><circle cx="1428.5" cy="105" r="0.65"/><circle cx="1425.5" cy="108" r="0.65"/><circle cx="1428.5" cy="108" r="0.65"/><circle cx="1425.5" cy="111" r="0.65"/><circle cx="1428.5" cy="111" r="0.65"/><circle cx="1425.5" cy="114" r="0.65"/><circle cx="1428.5" cy="114" r="0.65"/><circle cx="1425.5" cy="117" r="0.65"/><circle cx="1428.5" cy="117" r="0.65"/></g></svg><svg style="position:absolute;left:0;top:0" width="1" height="1"><g fill="#c0c0c0"><circle cx="1665.5" cy="102" r="0.65"/><circle cx="1668.5" cy="102" r="0.65"/><circle cx="1665.5" cy="105" r="0.65"/><circle cx="1668.5" cy="105" r="0.65"/><circle cx="1665.5" cy="108" r="0.65"/><circle cx="1668.5" cy="108" r="0.65"/><circle cx="1665.5" cy="111" r="0.65"/><circle cx="1668.5" cy="111" r="0.65"/><circle cx="1665.5" cy="114" r="0.65"/><circle cx="1668.5" cy="114" r="0.65"/><circle cx="1665.5" cy="117" r="0.65"/><circle cx="1668.5" cy="117" r="0.65"/></g></svg><svg style="position:absolute;left:405px;top:107px" width="10" height="6"><path d="M0.5 0.5H9.5L5 5.5Z" fill="#aaa"/></svg><svg style="position:absolute;left:1401.5px;top:107px" width="10" height="6"><path d="M0.5 0.5H9.5L5 5.5Z" fill="#555"/></svg><svg style="position:absolute;left:1468px;top:107px" width="10" height="6"><path d="M0.5 0.5H9.5L5 5.5Z" fill="#aaa"/></svg><svg style="position:absolute;left:1516px;top:107px" width="10" height="6"><path d="M0.5 0.5H9.5L5 5.5Z" fill="#aaa"/></svg><svg style="position:absolute;left:1564px;top:107px" width="10" height="6"><path d="M0.5 0.5H9.5L5 5.5Z" fill="#aaa"/></svg><svg style="position:absolute;left:1612.5px;top:107px" width="10" height="6"><path d="M0.5 0.5H9.5L5 5.5Z" fill="#aaa"/></svg><div style="position:absolute;left:1641px;top:101.46px;font-size:16px;line-height:16px;color:#000;font-weight:700;white-space:pre;">»</div><div style="position:absolute;left:1133px;top:98px;width:100px;height:24px;background:#fff;border:1px solid #b8b8b8;border-radius:2px;box-sizing:border-box"></div><div style="position:absolute;left:1216px;top:99px;width:16px;height:22px;background:#f6f6f6;border-left:1px solid #d8d8d8;box-sizing:border-box"></div><svg style="position:absolute;left:1216px;top:99px" width="16" height="22"><path d="M3.5 8L8 3.5L12.5 8Z" fill="#444"/><path d="M3.5 14L8 18.5L12.5 14Z" fill="#999"/></svg><div style="position:absolute;left:1138px;top:103.65px;font-size:14px;line-height:14px;color:#000;font-weight:400;white-space:pre;">0,00</div><div style="position:absolute;left:1236px;top:97px;width:64px;height:26px;background:linear-gradient(#fdfdfd,#ededed);border:1px solid #b8b8b8;border-radius:3px;box-sizing:border-box"></div><div style="position:absolute;left:1240px;top:103.65px;font-size:14px;line-height:14px;color:#000;font-weight:400;white-space:pre;">metri</div><svg style="position:absolute;left:1279px;top:107px" width="10" height="6"><path d="M0.5 0.5H9.5L5 5.5Z" fill="#444"/></svg><svg style="position:absolute;left:15.0px;top:148.0px" width="24" height="24" viewBox="0 0 24 24"><path d="M2 23V2L22 23Z" fill="#e4ddd6" stroke="#c4bcb4" stroke-width="1.2"/><path d="M6 19V11L14 19Z" fill="#f4f4f4" stroke="#c4bcb4"/><path d="M2 5H5M2 9H4M2 13H5M2 17H4" stroke="#b8b0a8" stroke-width="0.8"/></svg><svg style="position:absolute;left:15.0px;top:180.0px" width="24" height="24" viewBox="0 0 24 24"><path d="M1.5 7C1.5 2 8 1.5 13 2.5C20 3.5 22 7 20 11C18 14 12 12.5 8 14C4 15 1.5 11 1.5 7Z" fill="#d6d6d6" stroke="#bdbdbd" stroke-width="1.1"/><rect x="12" y="13" width="11" height="11" rx="2" fill="#cfcfcf"/><path d="M14 18.5H19M17 16L20 18.5L17 21" stroke="#fff" stroke-width="1.6" fill="none"/></svg><svg style="position:absolute;left:15.0px;top:212.0px" width="24" height="24" viewBox="0 0 24 24"><path d="M1.5 7C1.5 2 8 1.5 13 2.5C20 3.5 22 7 20 11C18 14 12 12.5 8 14C4 15 1.5 11 1.5 7Z" fill="#d6d6d6" stroke="#bdbdbd" stroke-width="1.1"/><rect x="12" y="13" width="11" height="11" rx="2" fill="#cfcfcf"/><path d="M14 18.5H19M17 16L20 18.5L17 21" stroke="#fff" stroke-width="1.6" fill="none"/></svg><svg style="position:absolute;left:15.0px;top:244.0px" width="24" height="24" viewBox="0 0 24 24"><circle cx="9" cy="9" r="7.5" fill="#dcdcdc" stroke="#c6c6c6"/><path d="M15 8L22 12V19L15 23L8 19V12Z" fill="#e6e6e6" stroke="#c6c6c6"/><path d="M9 9L15 15" stroke="#aaa"/></svg><svg style="position:absolute;left:15.0px;top:276.0px" width="24" height="24" viewBox="0 0 24 24"><path d="M1.5 7C1.5 2 8 1.5 13 2.5C20 3.5 22 7 20 11C18 14 12 12.5 8 14C4 15 1.5 11 1.5 7Z" fill="#d6d6d6" stroke="#bdbdbd" stroke-width="1.1"/><ellipse cx="7.5" cy="7.5" rx="4.5" ry="3" fill="#efefef" stroke="#c6c6c6" stroke-width="0.8"/><rect x="14" y="14" width="10" height="10" rx="1.5" fill="#c8c4b8"/><path d="M19 15.5V22.5M15.8 17.2L22.2 20.8M15.8 20.8L22.2 17.2" stroke="#fff" stroke-width="1.3"/></svg><svg style="position:absolute;left:15.0px;top:308.0px" width="24" height="24" viewBox="0 0 24 24"><path d="M1.5 7C1.5 2 8 1.5 13 2.5C20 3.5 22 7 20 11C18 14 12 12.5 8 14C4 15 1.5 11 1.5 7Z" fill="#d6d6d6" stroke="#bdbdbd" stroke-width="1.1"/><path d="M5 12C3 16 4 20 7 21C10 20 12 16 10 12Z" fill="#e0e0e0"/><rect x="14" y="13" width="10" height="10" rx="1.5" fill="#c8c4b8"/><path d="M19 15.5V22.5M15.8 17.2L22.2 20.8M15.8 20.8L22.2 17.2" stroke="#fff" stroke-width="1.3"/></svg><svg style="position:absolute;left:15.0px;top:340.0px" width="24" height="24" viewBox="0 0 24 24"><path d="M1.5 7C1.5 2 8 1.5 13 2.5C20 3.5 22 7 20 11C18 14 12 12.5 8 14C4 15 1.5 11 1.5 7Z" fill="#d6d6d6" stroke="#bdbdbd" stroke-width="1.1"/><ellipse cx="7.5" cy="7.5" rx="4.5" ry="3" fill="#efefef" stroke="#c6c6c6" stroke-width="0.8"/><rect x="14" y="14" width="10" height="10" rx="1.5" fill="#c8c4b8"/><path d="M19 15.5V22.5M15.8 17.2L22.2 20.8M15.8 20.8L22.2 17.2" stroke="#fff" stroke-width="1.3"/></svg><svg style="position:absolute;left:15.0px;top:372.0px" width="24" height="24" viewBox="0 0 24 24"><path d="M1.5 7C1.5 2 8 1.5 13 2.5C20 3.5 22 7 20 11C18 14 12 12.5 8 14C4 15 1.5 11 1.5 7Z" fill="#d6d6d6" stroke="#bdbdbd" stroke-width="1.1"/><ellipse cx="7.5" cy="7.5" rx="4.5" ry="3" fill="#efefef" stroke="#c6c6c6" stroke-width="0.8"/><rect x="13" y="13" width="10" height="10" rx="1.5" fill="#e0e0e0"/><path d="M15.5 15.5L20.5 20.5M20.5 15.5L15.5 20.5" stroke="#fff" stroke-width="1.6"/></svg><svg style="position:absolute;left:15.0px;top:403.0px" width="24" height="24" viewBox="0 0 24 24"><path d="M1.5 7C1.5 2 8 1.5 13 2.5C20 3.5 22 7 20 11C18 14 12 12.5 8 14C4 15 1.5 11 1.5 7Z" fill="#d6d6d6" stroke="#bdbdbd" stroke-width="1.1"/><ellipse cx="7.5" cy="7.5" rx="4.5" ry="3" fill="#efefef" stroke="#c6c6c6" stroke-width="0.8"/><rect x="13" y="13" width="10" height="10" rx="1.5" fill="#e0e0e0"/><path d="M15.5 15.5L20.5 20.5M20.5 15.5L15.5 20.5" stroke="#fff" stroke-width="1.6"/></svg><svg style="position:absolute;left:15.0px;top:435.0px" width="24" height="24" viewBox="0 0 24 24"><path d="M2 6C5 1 12 2 16 3C22 4 22 9 17 10C13 11 11 16 8 21C4 20 2 14 2 10Z" fill="#d8d8d8" stroke="#c6c6c6"/></svg><svg style="position:absolute;left:15.0px;top:467.0px" width="24" height="24" viewBox="0 0 24 24"><path d="M4 17C1 13 6 8 10 5C15 1 21 3 20 8C19 12 12 14 10 18C8 21 5 20 4 17Z" fill="#dcdcdc" stroke="#e8e8e8" stroke-width="1.5"/></svg><svg style="position:absolute;left:15.0px;top:499.0px" width="24" height="24" viewBox="0 0 24 24"><path d="M3 3L8 14L12 6H20" stroke="#ccc" stroke-width="1" fill="none"/><rect x="13" y="12" width="10" height="10" rx="1.5" fill="#e0e0e0" stroke="#d0d0d0"/></svg><svg style="position:absolute;left:15.0px;top:531.0px" width="24" height="24" viewBox="0 0 24 24"><path d="M2 12H22M12 2V22" stroke="#d0d0d0" stroke-width="1"/><circle cx="12" cy="12" r="2" fill="#fff" stroke="#ccc"/><rect x="16" y="3" width="6" height="6" fill="#eee" stroke="#ccc"/><rect x="2" y="15" width="6" height="6" fill="#eee" stroke="#ccc"/></svg><svg style="position:absolute;left:15.0px;top:563.0px" width="24" height="24" viewBox="0 0 24 24"><path d="M1.5 7C1.5 2 8 1.5 13 2.5C20 3.5 22 7 20 11C18 14 12 12.5 8 14C4 15 1.5 11 1.5 7Z" fill="#d6d6d6" stroke="#bdbdbd" stroke-width="1.1"/><circle cx="7" cy="19" r="3" fill="none" stroke="#d8c8c8" stroke-width="1.3"/><circle cx="16" cy="19" r="3" fill="none" stroke="#d8c8c8" stroke-width="1.3"/><path d="M8 10L15 17M15 10L8 17" stroke="#ccc"/></svg><svg style="position:absolute;left:15.0px;top:595.0px" width="24" height="24" viewBox="0 0 24 24"><path d="M1.5 7C1.5 2 8 1.5 13 2.5C20 3.5 22 7 20 11C18 14 12 12.5 8 14C4 15 1.5 11 1.5 7Z" fill="#d6d6d6" stroke="#bdbdbd" stroke-width="1.1"/><circle cx="7" cy="19" r="3" fill="none" stroke="#d8c8c8" stroke-width="1.3"/><circle cx="16" cy="19" r="3" fill="none" stroke="#d8c8c8" stroke-width="1.3"/><path d="M8 10L15 17M15 10L8 17" stroke="#ccc"/></svg><svg style="position:absolute;left:15.0px;top:626.0px" width="24" height="24" viewBox="0 0 24 24"><path d="M1.5 7C1.5 2 8 1.5 13 2.5C20 3.5 22 7 20 11C18 14 12 12.5 8 14C4 15 1.5 11 1.5 7Z" fill="#d6d6d6" stroke="#bdbdbd" stroke-width="1.1"/><path d="M5 12C6 17 10 20 14 22" stroke="#bbb" stroke-width="1"/></svg><svg style="position:absolute;left:15.0px;top:659.0px" width="24" height="24" viewBox="0 0 24 24"><path d="M2 4H22M2 10H22M2 16H22M2 22H22" stroke="#ddd" stroke-width="1"/><path d="M8 2V24M16 2V24" stroke="#e4e4e4" stroke-width="1"/></svg><svg style="position:absolute;left:15.0px;top:691.0px" width="24" height="24" viewBox="0 0 24 24"><path d="M2 20C2 12 6 6 14 5L12 2L20 6L13 11L14 8C8 9 5 14 5 20Z" fill="#ddd"/></svg><svg style="position:absolute;left:15.0px;top:741.0px" width="24" height="24" viewBox="0 0 24 24"><path d="M4 18L6 5L18 3L21 12L13 19Z" fill="#5b8fcc" stroke="#2a4a80"/><g fill="#f0d020" stroke="#333" stroke-width="0.8"><circle cx="4" cy="18" r="2.2"/><circle cx="6" cy="5" r="2.2"/><circle cx="18" cy="3" r="2.2"/><circle cx="21" cy="12" r="2.2"/></g><path d="M12 19L15 22L22 13" stroke="#e8c010" stroke-width="2.2" fill="none"/></svg><svg style="position:absolute;left:15.0px;top:773.0px" width="24" height="24" viewBox="0 0 24 24"><rect x="1" y="1" width="21" height="20" fill="#eaf2fa" stroke="#6a98d0"/><rect x="1" y="1" width="21" height="4" fill="#6a98d0"/><path d="M1 9H22M1 13H22M1 17H22M7 5V21" stroke="#9ab8dc" stroke-width="0.8"/><path d="M8 13A5 5 0 0 1 17 10L19 8V14H13L15 12A3 3 0 0 0 10 13ZM18 15A5 5 0 0 1 9 18L7 20V14H13L11 16A3 3 0 0 0 16 15Z" fill="#3aaa3a"/></svg><svg style="position:absolute;left:15.0px;top:825.0px" width="24" height="24" viewBox="0 0 24 24"><path d="M12 2L22 20H2Z" fill="none" stroke="#2aa040" stroke-width="3.2"/><path d="M2 22H22" stroke="#f2a020" stroke-width="2"/></svg><svg style="position:absolute;left:15.0px;top:855.0px" width="24" height="24" viewBox="0 0 24 24"><circle cx="10" cy="10" r="9" fill="#8ab0dc" stroke="#3a5a90"/><path d="M1 10H19M10 1V19M3 5C8 8 12 8 17 5M3 15C8 12 12 12 17 15" stroke="#2a4a80" stroke-width="0.9" fill="none"/><rect x="14" y="14" width="9" height="9" rx="1.5" fill="#3a8a4a"/><path d="M16 18.5H21M18.5 16V21" stroke="#fff" stroke-width="1.5"/></svg><svg style="position:absolute;left:15.0px;top:887.0px" width="24" height="24" viewBox="0 0 24 24"><circle cx="11" cy="10" r="9" fill="#8ab0dc" stroke="#3a5a90"/><path d="M2 10H20M11 1V19M4 5C9 8 13 8 18 5M4 15C9 12 13 12 18 15" stroke="#2a4a80" stroke-width="0.9" fill="none"/><rect x="14" y="14" width="9" height="9" rx="1.5" fill="#3a8a4a"/><circle cx="18" cy="18" r="2" fill="none" stroke="#fff"/></svg><svg style="position:absolute;left:15.0px;top:919.0px" width="24" height="24" viewBox="0 0 24 24"><circle cx="12" cy="10" r="9" fill="#8ab0dc" stroke="#3a5a90"/><path d="M3 10H21M12 1V19M5 5C10 8 14 8 19 5" stroke="#2a4a80" stroke-width="0.9" fill="none"/><circle cx="6" cy="19" r="4.5" fill="#111"/><circle cx="18" cy="19" r="4.5" fill="#111"/><rect x="8" y="16" width="8" height="3" fill="#111"/><circle cx="6" cy="19" r="2" fill="#fff"/><circle cx="18" cy="19" r="2" fill="#fff"/></svg><svg style="position:absolute;left:38px;top:189px" width="10" height="6"><path d="M0.5 0.5H9.5L5 5.5Z" fill="#aaa"/></svg><svg style="position:absolute;left:38px;top:701px" width="10" height="6"><path d="M0.5 0.5H9.5L5 5.5Z" fill="#aaa"/></svg><svg style="position:absolute;left:0;top:0" width="1" height="1"><g fill="#b4b4b4"><circle cx="21" cy="136.5" r="0.7"/><circle cx="21" cy="139.5" r="0.7"/><circle cx="24" cy="136.5" r="0.7"/><circle cx="24" cy="139.5" r="0.7"/><circle cx="27" cy="136.5" r="0.7"/><circle cx="27" cy="139.5" r="0.7"/><circle cx="30" cy="136.5" r="0.7"/><circle cx="30" cy="139.5" r="0.7"/><circle cx="33" cy="136.5" r="0.7"/><circle cx="33" cy="139.5" r="0.7"/><circle cx="36" cy="136.5" r="0.7"/><circle cx="36" cy="139.5" r="0.7"/></g></svg><svg style="position:absolute;left:0;top:0" width="1" height="1"><g fill="#b4b4b4"><circle cx="21" cy="730.5" r="0.7"/><circle cx="21" cy="733.5" r="0.7"/><circle cx="24" cy="730.5" r="0.7"/><circle cx="24" cy="733.5" r="0.7"/><circle cx="27" cy="730.5" r="0.7"/><circle cx="27" cy="733.5" r="0.7"/><circle cx="30" cy="730.5" r="0.7"/><circle cx="30" cy="733.5" r="0.7"/><circle cx="33" cy="730.5" r="0.7"/><circle cx="33" cy="733.5" r="0.7"/><circle cx="36" cy="730.5" r="0.7"/><circle cx="36" cy="733.5" r="0.7"/></g></svg><svg style="position:absolute;left:0;top:0" width="1" height="1"><g fill="#b4b4b4"><circle cx="21" cy="811.5" r="0.7"/><circle cx="21" cy="814.5" r="0.7"/><circle cx="24" cy="811.5" r="0.7"/><circle cx="24" cy="814.5" r="0.7"/><circle cx="27" cy="811.5" r="0.7"/><circle cx="27" cy="814.5" r="0.7"/><circle cx="30" cy="811.5" r="0.7"/><circle cx="30" cy="814.5" r="0.7"/><circle cx="33" cy="811.5" r="0.7"/><circle cx="33" cy="814.5" r="0.7"/><circle cx="36" cy="811.5" r="0.7"/><circle cx="36" cy="814.5" r="0.7"/></g></svg><div style="position:absolute;left:55px;top:130px;width:228px;height:917px;background:#f0f0f0"></div><div style="position:absolute;left:282px;top:130px;width:1px;height:918px;background:#a9a9a9"></div><div style="position:absolute;left:59px;top:133.90px;font-size:15px;line-height:15px;color:#000;font-weight:400;white-space:pre;">Layer</div><div style="position:absolute;left:54px;top:181px;width:221px;height:411px;background:#fff;border:1px solid #a0a0a0;box-sizing:border-box"></div><div style="position:absolute;left:57px;top:204px;width:217px;height:20px;background:#ebebeb"></div><div style="position:absolute;left:132px;top:186.15px;font-size:14px;line-height:14px;color:#000;font-weight:700;white-space:pre;">linea</div><div style="position:absolute;left:132px;top:207.85px;font-size:14px;line-height:14px;color:#000;font-weight:700;white-space:pre;text-decoration:underline">prova</div><div style="position:absolute;left:84px;top:185px;width:17px;height:17px;background:#fff;border:1px solid #909090;box-sizing:border-box"></div><svg style="position:absolute;left:85px;top:186px" width="15" height="15"><path d="M3 7.5L6 11.5L12 2.5" fill="none" stroke="#000" stroke-width="2"/></svg><div style="position:absolute;left:84px;top:206px;width:17px;height:17px;background:#fff;border:1px solid #909090;box-sizing:border-box"></div><svg style="position:absolute;left:85px;top:207px" width="15" height="15"><path d="M3 7.5L6 11.5L12 2.5" fill="none" stroke="#000" stroke-width="2"/></svg><svg style="position:absolute;left:106px;top:184px" width="22" height="18"><path d="M1 2L20 9L1 16Z" fill="#000"/></svg><div style="position:absolute;left:107px;top:205px;width:18px;height:18px;background:#8fbc80;border:1px solid #3d5a36;box-sizing:border-box"></div><div style="position:absolute;left:59px;top:602.30px;font-size:15px;line-height:15px;color:#000;font-weight:400;white-space:pre;">Browser</div><div style="position:absolute;left:54px;top:650px;width:221px;height:398px;background:#fff;border:1px solid #a0a0a0;box-sizing:border-box"></div><div style="position:absolute;left:257px;top:651px;width:17px;height:396px;background:#f0f0f0;border-left:1px solid #e0e0e0;box-sizing:border-box"></div><div style="position:absolute;left:258px;top:668px;width:16px;height:36px;background:#d8d8d8"></div><svg style="position:absolute;left:258px;top:652px" width="16" height="12"><path d="M3 9L8 4L13 9Z" fill="#444"/></svg><svg style="position:absolute;left:258px;top:1031px" width="16" height="12"><path d="M3 3L8 8L13 3Z" fill="#444"/></svg><svg style="position:absolute;left:63px;top:656px" width="10" height="12"><path d="M2 1L8 6L2 11Z" fill="#333"/></svg><svg style="position:absolute;left:83.0px;top:652.0px" width="22" height="22" viewBox="0 0 24 24"><path d="M3 5H9L11 7H21V20H3Z" fill="#efefef" stroke="#8a8a8a" stroke-width="1.2"/></svg><div style="position:absolute;left:110px;top:655.57px;font-size:13.5px;line-height:13.5px;color:#000;font-weight:400;white-space:pre;">C:\</div><svg style="position:absolute;left:63px;top:678px" width="10" height="12"><path d="M2 1L8 6L2 11Z" fill="#333"/></svg><svg style="position:absolute;left:83.0px;top:674.0px" width="22" height="22" viewBox="0 0 24 24"><path d="M3 5H9L11 7H21V20H3Z" fill="#efefef" stroke="#8a8a8a" stroke-width="1.2"/></svg><div style="position:absolute;left:110px;top:677.57px;font-size:13.5px;line-height:13.5px;color:#000;font-weight:400;white-space:pre;">D:\</div><svg style="position:absolute;left:63px;top:700px" width="10" height="12"><path d="M2 1L8 6L2 11Z" fill="#333"/></svg><svg style="position:absolute;left:83.0px;top:696.0px" width="22" height="22" viewBox="0 0 24 24"><path d="M3 5H9L11 7H21V20H3Z" fill="#efefef" stroke="#8a8a8a" stroke-width="1.2"/></svg><div style="position:absolute;left:110px;top:699.57px;font-size:13.5px;line-height:13.5px;color:#000;font-weight:400;white-space:pre;">E:\</div><svg style="position:absolute;left:63px;top:722px" width="10" height="12"><path d="M2 1L8 6L2 11Z" fill="#333"/></svg><svg style="position:absolute;left:83.0px;top:718.0px" width="22" height="22" viewBox="0 0 24 24"><path d="M3 5H9L11 7H21V20H3Z" fill="#efefef" stroke="#8a8a8a" stroke-width="1.2"/></svg><div style="position:absolute;left:110px;top:721.57px;font-size:13.5px;line-height:13.5px;color:#000;font-weight:400;white-space:pre;">F:\</div><svg style="position:absolute;left:63px;top:744px" width="10" height="12"><path d="M2 1L8 6L2 11Z" fill="#333"/></svg><svg style="position:absolute;left:83.0px;top:740.0px" width="22" height="22" viewBox="0 0 24 24"><circle cx="12" cy="9" r="8" fill="#5b8fcc" stroke="#2a4a80" stroke-width="0.6"/><path d="M6 5C9 8 11 6 12 9C13 12 16 9 18 6" stroke="#2a4a80" stroke-width="1.6" fill="none"/><path d="M1.5 11L12 15V23L1.5 19Z" fill="#d8b020" stroke="#333" stroke-width="0.7"/><path d="M12 15L22.5 11V19L12 23Z" fill="#f4e060" stroke="#333" stroke-width="0.7"/></svg><div style="position:absolute;left:110px;top:743.57px;font-size:13.5px;line-height:13.5px;color:#000;font-weight:400;white-space:pre;">GeoPackage</div><svg style="position:absolute;left:63px;top:766px" width="10" height="12"><path d="M2 1L8 6L2 11Z" fill="#333"/></svg><svg style="position:absolute;left:83.0px;top:762.0px" width="22" height="22" viewBox="0 0 24 24"><path d="M4 21C6 12 12 5 21 3C18 10 12 17 4 21Z" fill="#7aa0d0" stroke="#3f6aa6" stroke-width="1"/></svg><div style="position:absolute;left:110px;top:765.57px;font-size:13.5px;line-height:13.5px;color:#000;font-weight:400;white-space:pre;">SpatiaLite</div><svg style="position:absolute;left:63px;top:788px" width="10" height="12"><path d="M2 1L8 6L2 11Z" fill="#333"/></svg><svg style="position:absolute;left:83.0px;top:784.0px" width="22" height="22" viewBox="0 0 24 24"><path d="M3 10C2 4 8 1 12 2C16 1 22 3 21.5 9C21 13 19 14 18 14V21H15V15H13V22H10V15C6 15 4 14 3 10Z" fill="#6c94c8" stroke="#2f5a90" stroke-width="1"/><path d="M12 3C10 6 11 10 13 12" stroke="#2f5a90" fill="none"/></svg><div style="position:absolute;left:110px;top:787.57px;font-size:13.5px;line-height:13.5px;color:#000;font-weight:400;white-space:pre;">PostGIS</div><svg style="position:absolute;left:63px;top:810px" width="10" height="12"><path d="M2 1L8 6L2 11Z" fill="#333"/></svg><svg style="position:absolute;left:83.0px;top:806.0px" width="22" height="22" viewBox="0 0 24 24"><path d="M2 22C6 15 7 8 4 2C10 4 18 7 22 13C16 14 9 17 2 22Z" fill="#6c94c8" stroke="#2f5a90" stroke-width="1"/><path d="M6 4C10 9 11 15 8 19M12 7C15 10 16 13 14 16" stroke="#2f5a90" fill="none" stroke-width="0.8"/></svg><div style="position:absolute;left:110px;top:809.57px;font-size:13.5px;line-height:13.5px;color:#000;font-weight:400;white-space:pre;">MSSQL</div><svg style="position:absolute;left:63px;top:832px" width="10" height="12"><path d="M2 1L8 6L2 11Z" fill="#333"/></svg><svg style="position:absolute;left:83.0px;top:828.0px" width="22" height="22" viewBox="0 0 24 24"><rect x="3" y="6" width="18" height="12" rx="6" fill="#6c94c8" stroke="#2f5a90" stroke-width="1.3"/></svg><div style="position:absolute;left:110px;top:831.57px;font-size:13.5px;line-height:13.5px;color:#000;font-weight:400;white-space:pre;">Oracle</div><svg style="position:absolute;left:63px;top:854px" width="10" height="12"><path d="M2 1L8 6L2 11Z" fill="#333"/></svg><svg style="position:absolute;left:83.0px;top:850.0px" width="22" height="22" viewBox="0 0 24 24"><rect x="3" y="3" width="18" height="18" rx="3" fill="#7aa0d2"/><text x="12" y="15" font-size="7.5" text-anchor="middle" fill="#fff" font-family="Liberation Sans">DB2</text></svg><div style="position:absolute;left:110px;top:853.57px;font-size:13.5px;line-height:13.5px;color:#000;font-weight:400;white-space:pre;">DB2</div><svg style="position:absolute;left:63px;top:876px" width="10" height="12"><path d="M2 1L8 6L2 11Z" fill="#333"/></svg><svg style="position:absolute;left:83.0px;top:872.0px" width="22" height="22" viewBox="0 0 24 24"><circle cx="12" cy="12" r="9.5" fill="#a8c4e4" stroke="#4e74a8" stroke-width="1"/><path d="M5 7C7 6 9 7 9 9C8 11 10 12 9 14C8 16 7 17 6 15C5 13 4 10 5 7ZM13 5C15 4 18 6 19 8C18 10 16 9 15 11C16 13 18 14 17 17C15 19 14 16 14 14C13 12 12 9 13 5Z" fill="#3a5a8a"/></svg><div style="position:absolute;left:110px;top:875.57px;font-size:13.5px;line-height:13.5px;color:#000;font-weight:400;white-space:pre;">WMS/WMTS</div><svg style="position:absolute;left:63px;top:898px" width="10" height="12"><path d="M2 1L8 6L2 11Z" fill="#333"/></svg><svg style="position:absolute;left:83.0px;top:894.0px" width="22" height="22" viewBox="0 0 24 24"><circle cx="12" cy="12" r="9.5" fill="#a8c4e4" stroke="#4e74a8" stroke-width="1"/><path d="M5 7C7 6 9 7 9 9C8 11 10 12 9 14C8 16 7 17 6 15C5 13 4 10 5 7ZM13 5C15 4 18 6 19 8C18 10 16 9 15 11C16 13 18 14 17 17C15 19 14 16 14 14C13 12 12 9 13 5Z" fill="#3a5a8a"/></svg><div style="position:absolute;left:110px;top:897.57px;font-size:13.5px;line-height:13.5px;color:#000;font-weight:400;white-space:pre;">XYZ Tiles</div><svg style="position:absolute;left:63px;top:920px" width="10" height="12"><path d="M2 1L8 6L2 11Z" fill="#333"/></svg><svg style="position:absolute;left:83.0px;top:916.0px" width="22" height="22" viewBox="0 0 24 24"><circle cx="12" cy="12" r="9" fill="#6a8fc0" stroke="#2f4f80" stroke-width="1.3"/><path d="M3 12H21M12 3V21M6 6C10 10 14 10 18 6M6 18C10 14 14 14 18 18" stroke="#1f3860" stroke-width="1.3" fill="none"/></svg><div style="position:absolute;left:110px;top:919.57px;font-size:13.5px;line-height:13.5px;color:#000;font-weight:400;white-space:pre;">WCS</div><svg style="position:absolute;left:63px;top:942px" width="10" height="12"><path d="M2 1L8 6L2 11Z" fill="#333"/></svg><svg style="position:absolute;left:83.0px;top:938.0px" width="22" height="22" viewBox="0 0 24 24"><circle cx="12" cy="12" r="9" fill="#dbe6f4" stroke="#5a80b0" stroke-width="1"/><path d="M7 7L11 18L15 6M11 18L17 9" stroke="#333" stroke-width="1.2" fill="none"/></svg><div style="position:absolute;left:110px;top:941.57px;font-size:13.5px;line-height:13.5px;color:#000;font-weight:400;white-space:pre;">WFS</div><svg style="position:absolute;left:63px;top:964px" width="10" height="12"><path d="M2 1L8 6L2 11Z" fill="#333"/></svg><svg style="position:absolute;left:83.0px;top:960.0px" width="22" height="22" viewBox="0 0 24 24"><circle cx="12" cy="12" r="9" fill="#eef3fa" stroke="#5a80b0" stroke-width="1.2"/><path d="M3 12H21M12 3V21M5 7H19M5 17H19" stroke="#5a80b0" stroke-width="1" fill="none"/><ellipse cx="12" cy="12" rx="4" ry="9" fill="none" stroke="#5a80b0"/></svg><div style="position:absolute;left:110px;top:963.57px;font-size:13.5px;line-height:13.5px;color:#000;font-weight:400;white-space:pre;">OWS</div><svg style="position:absolute;left:63px;top:986px" width="10" height="12"><path d="M2 1L8 6L2 11Z" fill="#333"/></svg><svg style="position:absolute;left:83.0px;top:982.0px" width="22" height="22" viewBox="0 0 24 24"><circle cx="12" cy="12" r="9.5" fill="#a8c4e4" stroke="#4e74a8" stroke-width="1"/><path d="M5 7C7 6 9 7 9 9C8 11 10 12 9 14C8 16 7 17 6 15C5 13 4 10 5 7ZM13 5C15 4 18 6 19 8C18 10 16 9 15 11C16 13 18 14 17 17C15 19 14 16 14 14C13 12 12 9 13 5Z" fill="#3a5a8a"/></svg><div style="position:absolute;left:110px;top:985.57px;font-size:13.5px;line-height:13.5px;color:#000;font-weight:400;white-space:pre;">ArcGisMapServer</div><svg style="position:absolute;left:63px;top:1008px" width="10" height="12"><path d="M2 1L8 6L2 11Z" fill="#333"/></svg><svg style="position:absolute;left:83.0px;top:1004.0px" width="22" height="22" viewBox="0 0 24 24"><circle cx="12" cy="12" r="9.5" fill="#a8c4e4" stroke="#4e74a8" stroke-width="1"/><path d="M5 7C7 6 9 7 9 9C8 11 10 12 9 14C8 16 7 17 6 15C5 13 4 10 5 7ZM13 5C15 4 18 6 19 8C18 10 16 9 15 11C16 13 18 14 17 17C15 19 14 16 14 14C13 12 12 9 13 5Z" fill="#3a5a8a"/></svg><div style="position:absolute;left:110px;top:1007.57px;font-size:13.5px;line-height:13.5px;color:#000;font-weight:400;white-space:pre;">ArcGisFeatureServer</div><svg style="position:absolute;left:63px;top:1030px" width="10" height="12"><path d="M2 1L8 6L2 11Z" fill="#333"/></svg><svg style="position:absolute;left:83.0px;top:1026.0px" width="22" height="22" viewBox="0 0 24 24"><g fill="#4f80c0" transform="translate(12 12)"><ellipse cx="0" cy="-6" rx="2.6" ry="4.5"/><ellipse cx="0" cy="-6" rx="2.6" ry="4.5" transform="rotate(60)"/><ellipse cx="0" cy="-6" rx="2.6" ry="4.5" transform="rotate(120)"/><ellipse cx="0" cy="-6" rx="2.6" ry="4.5" transform="rotate(180)"/><ellipse cx="0" cy="-6" rx="2.6" ry="4.5" transform="rotate(240)"/><ellipse cx="0" cy="-6" rx="2.6" ry="4.5" transform="rotate(300)"/></g><circle cx="12" cy="12" r="2" fill="#fff"/></svg><div style="position:absolute;left:110px;top:1029.57px;font-size:13.5px;line-height:13.5px;color:#000;font-weight:400;white-space:pre;">GeoNode</div><svg style="position:absolute;left:247px;top:134px" width="12" height="12"><rect x="0.5" y="0.5" width="11" height="11" rx="2" fill="none" stroke="#777"/><rect x="2.5" y="4.5" width="5" height="5" fill="none" stroke="#777"/><path d="M4.5 4.5V2.5H9.5V7.5H7.5" fill="none" stroke="#777"/></svg><svg style="position:absolute;left:261px;top:134px" width="12" height="12"><rect x="0.5" y="0.5" width="11" height="11" rx="2" fill="none" stroke="#777"/><path d="M3 3L9 9M9 3L3 9" stroke="#666" stroke-width="1.8"/></svg><svg style="position:absolute;left:247px;top:602px" width="12" height="12"><rect x="0.5" y="0.5" width="11" height="11" rx="2" fill="none" stroke="#777"/><rect x="2.5" y="4.5" width="5" height="5" fill="none" stroke="#777"/><path d="M4.5 4.5V2.5H9.5V7.5H7.5" fill="none" stroke="#777"/></svg><svg style="position:absolute;left:261px;top:602px" width="12" height="12"><rect x="0.5" y="0.5" width="11" height="11" rx="2" fill="none" stroke="#777"/><path d="M3 3L9 9M9 3L3 9" stroke="#666" stroke-width="1.8"/></svg><svg style="position:absolute;left:61.0px;top:155.0px" width="20" height="20" viewBox="0 0 24 24"><path d="M3 14L9 9L15 15L10 21Z" fill="#f2c020"/><path d="M3 14L6 12L12 18L10 21Z" fill="#d82020"/><path d="M3 14L9 16L10 21Z" fill="#3a6ac0"/><path d="M12 12L21 3" stroke="#c07020" stroke-width="3"/></svg><svg style="position:absolute;left:86.0px;top:155.0px" width="20" height="20" viewBox="0 0 24 24"><path d="M6 2H14V16H6Z" fill="#f4f4f4" stroke="#666"/><path d="M3 5H11V19H3Z" fill="#f4f4f4" stroke="#666"/><path d="M9 2V8" stroke="#666"/><circle cx="17" cy="18" r="4.5" fill="#3a9a4a"/><path d="M14.5 18H19.5M17 15.5V20.5" stroke="#fff" stroke-width="1.4"/></svg><svg style="position:absolute;left:111.0px;top:155.0px" width="20" height="20" viewBox="0 0 24 24"><path d="M1 11C6 4 16 4 21 11C16 17 6 17 1 11Z" fill="#dde8f4" stroke="#555"/><circle cx="11" cy="11" r="4" fill="#4a80c0"/><circle cx="11" cy="11" r="1.5" fill="#111"/><path d="M15 17H23L19 21Z" fill="#444"/></svg><svg style="position:absolute;left:136.0px;top:155.0px" width="20" height="20" viewBox="0 0 24 24"><path d="M2 3H22L14 12V22L10 20V12Z" fill="#5b8fcc" stroke="#3a6aa0" stroke-width="0.6"/><rect x="2" y="2" width="20" height="3" fill="#f2d020"/></svg><svg style="position:absolute;left:161.0px;top:155.0px" width="20" height="20" viewBox="0 0 24 24"><path d="M12 3.5C10 1.5 4.5 1.5 4.5 5C4.5 7 7 7.5 8.5 7.5C6 7.5 3.5 8.5 3.5 11C3.5 14 9 14.5 12 12" fill="none" stroke="#6a3a8a" stroke-width="1.8"/><rect x="13" y="13" width="9" height="9" rx="1.5" fill="#999"/><rect x="15" y="16" width="5" height="6" fill="#ddd"/></svg><svg style="position:absolute;left:201.0px;top:155.0px" width="20" height="20" viewBox="0 0 24 24"><path d="M3 4H7M3 4V20M3 12H7M3 20H7" stroke="#888" stroke-width="1.5"/><rect x="6" y="7" width="4" height="4" fill="#f29a20"/><rect x="6" y="15" width="4" height="4" fill="#f29a20"/><path d="M13 2H18V14H22L15.5 22L9 14H13Z" fill="#5b8fcc" stroke="#2a4a80" stroke-width="0.6"/></svg><svg style="position:absolute;left:226.0px;top:155.0px" width="20" height="20" viewBox="0 0 24 24"><path d="M3 4H7M3 4V20M3 12H7M3 20H7" stroke="#888" stroke-width="1.5"/><rect x="6" y="7" width="4" height="4" fill="#f29a20"/><rect x="6" y="15" width="4" height="4" fill="#f29a20"/><path d="M13 22H18V10H22L15.5 2L9 10H13Z" fill="#5b8fcc" stroke="#2a4a80" stroke-width="0.6"/></svg><svg style="position:absolute;left:185px;top:162px" width="10" height="6"><path d="M0.5 0.5H9.5L5 5.5Z" fill="#555"/></svg><div style="position:absolute;left:258px;top:156.46px;font-size:16px;line-height:16px;color:#000;font-weight:700;white-space:pre;">»</div><svg style="position:absolute;left:254.0px;top:184.0px" width="18" height="18" viewBox="0 0 24 24"><rect x="2" y="7" width="20" height="10" rx="1.5" fill="#fff" stroke="#999" stroke-width="1.3"/><path d="M5 4V7M8 4V7M11 4V7M14 4V7M17 4V7M20 4V7M5 17V20M8 17V20M11 17V20M14 17V20M17 17V20M20 17V20" stroke="#999" stroke-width="1.3"/></svg><svg style="position:absolute;left:254.0px;top:205.0px" width="18" height="18" viewBox="0 0 24 24"><path d="M2 3H22L14 12V22L10 20V12Z" fill="none" stroke="#6a98d0" stroke-width="1.5"/></svg><svg style="position:absolute;left:61.0px;top:624.0px" width="20" height="20" viewBox="0 0 24 24"><rect x="2" y="2" width="16" height="16" fill="#fff" stroke="#555" stroke-width="1.2"/><circle cx="18" cy="18" r="4" fill="#3a9a4a"/><circle cx="18" cy="18" r="2" fill="#8cd08c"/></svg><svg style="position:absolute;left:86.0px;top:624.0px" width="20" height="20" viewBox="0 0 24 24"><path d="M4 11A8 8 0 0 1 18 6L20 3V11H12L15 8A5 5 0 0 0 7 11Z" fill="#3f86d0"/><path d="M20 13A8 8 0 0 1 6 18L4 21V13H12L9 16A5 5 0 0 0 17 13Z" fill="#3f86d0"/></svg><svg style="position:absolute;left:111.0px;top:624.0px" width="20" height="20" viewBox="0 0 24 24"><path d="M2 3H22L14 12V22L10 20V12Z" fill="#5b8fcc" stroke="#3a6aa0" stroke-width="0.6"/><rect x="2" y="2" width="20" height="3" fill="#f2d020"/></svg><svg style="position:absolute;left:136.0px;top:624.0px" width="20" height="20" viewBox="0 0 24 24"><path d="M3 4H7M3 4V20M3 12H7M3 20H7" stroke="#888" stroke-width="1.5"/><rect x="6" y="7" width="4" height="4" fill="#f29a20"/><rect x="6" y="15" width="4" height="4" fill="#f29a20"/><path d="M13 22H18V10H22L15.5 2L9 10H13Z" fill="#5b8fcc" stroke="#2a4a80" stroke-width="0.6"/></svg><svg style="position:absolute;left:161.0px;top:624.0px" width="20" height="20" viewBox="0 0 24 24"><circle cx="12" cy="12" r="10" fill="#5b8fcc"/><text x="12" y="17" font-size="13" font-weight="700" font-style="italic" text-anchor="middle" fill="#fff" font-family="Liberation Serif">i</text></svg><div style="position:absolute;left:283px;top:130px;width:1132px;height:918px;background:#fff"></div><div style="position:absolute;left:1415px;top:130px;width:1px;height:918px;background:#a9a9a9"></div><div style="position:absolute;left:283px;top:1047px;width:1132px;height:1px;background:#a9a9a9"></div><svg style="position:absolute;left:0;top:0" width="1920" height="1080"><defs><clipPath id="cv"><rect x="283" y="130" width="1132" height="917"/></clipPath></defs><g clip-path="url(#cv)"><polygon points="431.10,699.60 902.60,168.10 1266.70,493.30 795.20,1024.80" fill="#bed150" stroke="#222" stroke-width="1.6" stroke-linejoin="miter"/><line x1="464.78" y1="661.64" x2="828.88" y2="986.84" stroke="#222" stroke-width="1.6"/><line x1="498.46" y1="623.67" x2="862.56" y2="948.87" stroke="#222" stroke-width="1.6"/><line x1="532.14" y1="585.71" x2="896.24" y2="910.91" stroke="#222" stroke-width="1.6"/><line x1="565.81" y1="547.74" x2="929.91" y2="872.94" stroke="#222" stroke-width="1.6"/><line x1="599.49" y1="509.78" x2="963.59" y2="834.98" stroke="#222" stroke-width="1.6"/><line x1="633.17" y1="471.81" x2="997.27" y2="797.01" stroke="#222" stroke-width="1.6"/><line x1="666.85" y1="433.85" x2="1030.95" y2="759.05" stroke="#222" stroke-width="1.6"/><line x1="700.53" y1="395.89" x2="1064.63" y2="721.09" stroke="#222" stroke-width="1.6"/><line x1="734.21" y1="357.92" x2="1098.31" y2="683.12" stroke="#222" stroke-width="1.6"/><line x1="767.89" y1="319.96" x2="1131.99" y2="645.16" stroke="#222" stroke-width="1.6"/><line x1="801.56" y1="281.99" x2="1165.66" y2="607.19" stroke="#222" stroke-width="1.6"/><line x1="835.24" y1="244.03" x2="1199.34" y2="569.23" stroke="#222" stroke-width="1.6"/><line x1="868.92" y1="206.06" x2="1233.02" y2="531.26" stroke="#222" stroke-width="1.6"/><line x1="491.78" y1="753.80" x2="963.28" y2="222.30" stroke="#222" stroke-width="1.6"/><line x1="552.47" y1="808.00" x2="1023.97" y2="276.50" stroke="#222" stroke-width="1.6"/><line x1="613.15" y1="862.20" x2="1084.65" y2="330.70" stroke="#222" stroke-width="1.6"/><line x1="673.83" y1="916.40" x2="1145.33" y2="384.90" stroke="#222" stroke-width="1.6"/><line x1="734.52" y1="970.60" x2="1206.02" y2="439.10" stroke="#222" stroke-width="1.6"/><g font-family="Liberation Sans" font-size="23" text-anchor="middle" fill="#fff" stroke="#fff" stroke-width="5" stroke-linejoin="round"><text x="478.3" y="716.0">1</text><text x="512.0" y="678.1">2</text><text x="545.6" y="640.1">3</text><text x="579.3" y="602.1">4</text><text x="613.0" y="564.2">5</text><text x="646.7" y="526.2">6</text><text x="680.4" y="488.2">7</text><text x="714.0" y="450.3">8</text><text x="747.7" y="412.3">9</text><text x="781.4" y="374.3">10</text><text x="815.1" y="336.4">11</text><text x="848.7" y="298.4">12</text><text x="882.4" y="260.4">13</text><text x="916.1" y="222.5">14</text><text x="539.0" y="770.2">15</text><text x="572.6" y="732.3">16</text><text x="606.3" y="694.3">17</text><text x="640.0" y="656.3">18</text><text x="673.7" y="618.4">19</text><text x="707.4" y="580.4">20</text><text x="741.0" y="542.4">21</text><text x="774.7" y="504.5">22</text><text x="808.4" y="466.5">23</text><text x="842.1" y="428.5">24</text><text x="875.8" y="390.6">25</text><text x="909.4" y="352.6">26</text><text x="943.1" y="314.6">27</text><text x="976.8" y="276.7">28</text><text x="599.6" y="824.4">29</text><text x="633.3" y="786.5">30</text><text x="667.0" y="748.5">31</text><text x="700.7" y="710.5">32</text><text x="734.4" y="672.6">33</text><text x="768.0" y="634.6">34</text><text x="801.7" y="596.6">35</text><text x="835.4" y="558.7">36</text><text x="869.1" y="520.7">37</text><text x="902.8" y="482.7">38</text><text x="936.4" y="444.8">39</text><text x="970.1" y="406.8">40</text><text x="1003.8" y="368.8">41</text><text x="1037.5" y="330.9">42</text><text x="660.3" y="878.6">43</text><text x="694.0" y="840.7">44</text><text x="727.7" y="802.7">45</text><text x="761.4" y="764.7">46</text><text x="795.0" y="726.8">47</text><text x="828.7" y="688.8">48</text><text x="862.4" y="650.8">49</text><text x="896.1" y="612.9">50</text><text x="929.8" y="574.9">51</text><text x="963.4" y="536.9">52</text><text x="997.1" y="499.0">53</text><text x="1030.8" y="461.0">54</text><text x="1064.5" y="423.0">55</text><text x="1098.2" y="385.1">56</text><text x="721.0" y="932.8">57</text><text x="754.7" y="894.9">58</text><text x="788.4" y="856.9">59</text><text x="822.1" y="818.9">60</text><text x="855.7" y="781.0">61</text><text x="889.4" y="743.0">62</text><text x="923.1" y="705.0">63</text><text x="956.8" y="667.1">64</text><text x="990.4" y="629.1">65</text><text x="1024.1" y="591.1">66</text><text x="1057.8" y="553.2">67</text><text x="1091.5" y="515.2">68</text><text x="1125.2" y="477.2">69</text><text x="1158.8" y="439.3">70</text><text x="781.7" y="987.0">71</text><text x="815.4" y="949.1">72</text><text x="849.1" y="911.1">73</text><text x="882.7" y="873.1">74</text><text x="916.4" y="835.2">75</text><text x="950.1" y="797.2">76</text><text x="983.8" y="759.2">77</text><text x="1017.4" y="721.3">78</text><text x="1051.1" y="683.3">79</text><text x="1084.8" y="645.3">80</text><text x="1118.5" y="607.4">81</text><text x="1152.2" y="569.4">82</text><text x="1185.8" y="531.4">83</text><text x="1219.5" y="493.5">84</text></g><g font-family="Liberation Sans" font-size="23" text-anchor="middle" fill="#000"><text x="478.3" y="716.0">1</text><text x="512.0" y="678.1">2</text><text x="545.6" y="640.1">3</text><text x="579.3" y="602.1">4</text><text x="613.0" y="564.2">5</text><text x="646.7" y="526.2">6</text><text x="680.4" y="488.2">7</text><text x="714.0" y="450.3">8</text><text x="747.7" y="412.3">9</text><text x="781.4" y="374.3">10</text><text x="815.1" y="336.4">11</text><text x="848.7" y="298.4">12</text><text x="882.4" y="260.4">13</text><text x="916.1" y="222.5">14</text><text x="539.0" y="770.2">15</text><text x="572.6" y="732.3">16</text><text x="606.3" y="694.3">17</text><text x="640.0" y="656.3">18</text><text x="673.7" y="618.4">19</text><text x="707.4" y="580.4">20</text><text x="741.0" y="542.4">21</text><text x="774.7" y="504.5">22</text><text x="808.4" y="466.5">23</text><text x="842.1" y="428.5">24</text><text x="875.8" y="390.6">25</text><text x="909.4" y="352.6">26</text><text x="943.1" y="314.6">27</text><text x="976.8" y="276.7">28</text><text x="599.6" y="824.4">29</text><text x="633.3" y="786.5">30</text><text x="667.0" y="748.5">31</text><text x="700.7" y="710.5">32</text><text x="734.4" y="672.6">33</text><text x="768.0" y="634.6">34</text><text x="801.7" y="596.6">35</text><text x="835.4" y="558.7">36</text><text x="869.1" y="520.7">37</text><text x="902.8" y="482.7">38</text><text x="936.4" y="444.8">39</text><text x="970.1" y="406.8">40</text><text x="1003.8" y="368.8">41</text><text x="1037.5" y="330.9">42</text><text x="660.3" y="878.6">43</text><text x="694.0" y="840.7">44</text><text x="727.7" y="802.7">45</text><text x="761.4" y="764.7">46</text><text x="795.0" y="726.8">47</text><text x="828.7" y="688.8">48</text><text x="862.4" y="650.8">49</text><text x="896.1" y="612.9">50</text><text x="929.8" y="574.9">51</text><text x="963.4" y="536.9">52</text><text x="997.1" y="499.0">53</text><text x="1030.8" y="461.0">54</text><text x="1064.5" y="423.0">55</text><text x="1098.2" y="385.1">56</text><text x="721.0" y="932.8">57</text><text x="754.7" y="894.9">58</text><text x="788.4" y="856.9">59</text><text x="822.1" y="818.9">60</text><text x="855.7" y="781.0">61</text><text x="889.4" y="743.0">62</text><text x="923.1" y="705.0">63</text><text x="956.8" y="667.1">64</text><text x="990.4" y="629.1">65</text><text x="1024.1" y="591.1">66</text><text x="1057.8" y="553.2">67</text><text x="1091.5" y="515.2">68</text><text x="1125.2" y="477.2">69</text><text x="1158.8" y="439.3">70</text><text x="781.7" y="987.0">71</text><text x="815.4" y="949.1">72</text><text x="849.1" y="911.1">73</text><text x="882.7" y="873.1">74</text><text x="916.4" y="835.2">75</text><text x="950.1" y="797.2">76</text><text x="983.8" y="759.2">77</text><text x="1017.4" y="721.3">78</text><text x="1051.1" y="683.3">79</text><text x="1084.8" y="645.3">80</text><text x="1118.5" y="607.4">81</text><text x="1152.2" y="569.4">82</text><text x="1185.8" y="531.4">83</text><text x="1219.5" y="493.5">84</text></g><line x1="431" y1="699" x2="860" y2="162" stroke="#000" stroke-width="2.6"/><polygon points="868.5,152.6 847.0,167.8 858.5,176.7" fill="#000" stroke="#000" stroke-width="1.5" stroke-linejoin="round"/><path d="M399,214 H595.5 V320.5 L683.8,381.8 L595.5,329.3 H399 Z" fill="#fff" stroke="#000" stroke-width="1.5"/><path d="M679.5,381.5h8M683.5,377.5v8" stroke="#888" stroke-width="1"/></g></svg><div style="position:absolute;left:403px;top:221.32px;font-size:20.3px;line-height:20.3px;color:#000;font-weight:400;white-space:pre;">Linea di riferimento</div><div style="position:absolute;left:403px;top:245.12px;font-size:20.3px;line-height:20.3px;color:#000;font-weight:400;white-space:pre;">rispetto alla quale</div><div style="position:absolute;left:403px;top:268.92px;font-size:20.3px;line-height:20.3px;color:#000;font-weight:400;white-space:pre;">calcolare le distanze</div><div style="position:absolute;left:403px;top:292.72px;font-size:20.3px;line-height:20.3px;color:#000;font-weight:400;white-space:pre;">dei rettangoli</div><div style="position:absolute;left:992px;top:1017.86px;font-size:23.2px;line-height:23.2px;color:#000;font-weight:400;white-space:pre;">© Salvat</div><div style="position:absolute;left:1416px;top:130px;width:504px;height:535px;background:#f0f0f0"></div><div style="position:absolute;left:1427px;top:133.17px;font-size:14.8px;line-height:14.8px;color:#000;font-weight:400;white-space:pre;">prova :: Totale degli elementi: 84, Filtrati: 84, Selezionati: 0</div><svg style="position:absolute;left:1892px;top:134px" width="12" height="12"><rect x="0.5" y="0.5" width="11" height="11" rx="2" fill="none" stroke="#777"/><rect x="2.5" y="4.5" width="5" height="5" fill="none" stroke="#777"/><path d="M4.5 4.5V2.5H9.5V7.5H7.5" fill="none" stroke="#777"/></svg><svg style="position:absolute;left:1906px;top:134px" width="12" height="12"><rect x="0.5" y="0.5" width="11" height="11" rx="2" fill="none" stroke="#777"/><path d="M3 3L9 9M9 3L3 9" stroke="#666" stroke-width="1.8"/></svg><svg style="position:absolute;left:1428.0px;top:155.0px" width="20" height="20" viewBox="0 0 24 24"><path d="M5 22L7 16L17 3L20 5L10 19Z" fill="#e0c840" stroke="#8a7a20" stroke-width="0.6"/><path d="M5 22L7 16L10 19Z" fill="#aaa"/></svg><svg style="position:absolute;left:1453.0px;top:155.0px" width="20" height="20" viewBox="0 0 24 24"><rect x="2" y="4" width="18" height="4" fill="#dedad0"/><rect x="2" y="10" width="18" height="4" fill="#dedad0"/><rect x="2" y="16" width="18" height="4" fill="#dedad0"/><path d="M10 20L20 4" stroke="#e0e0e0" stroke-width="3"/></svg><svg style="position:absolute;left:1478.0px;top:155.0px" width="20" height="20" viewBox="0 0 24 24"><rect x="3" y="3" width="18" height="18" rx="2" fill="#e0e0e0"/><rect x="6" y="4" width="12" height="6" fill="#f0f0f0"/></svg><svg style="position:absolute;left:1504.0px;top:155.0px" width="20" height="20" viewBox="0 0 24 24"><path d="M4 11A8 8 0 0 1 18 6L20 3V11H12L15 8A5 5 0 0 0 7 11Z" fill="#3f86d0"/><path d="M20 13A8 8 0 0 1 6 18L4 21V13H12L9 16A5 5 0 0 0 17 13Z" fill="#3f86d0"/></svg><svg style="position:absolute;left:1537.0px;top:155.0px" width="20" height="20" viewBox="0 0 24 24"><rect x="2" y="4" width="18" height="14" fill="#ececec" stroke="#ddd"/><path d="M2 9H20M2 13H20" stroke="#ddd"/><rect x="14" y="14" width="10" height="10" rx="1.5" fill="#c8c4b8"/><path d="M19 15.5V22.5M15.8 17.2L22.2 20.8M15.8 20.8L22.2 17.2" stroke="#fff" stroke-width="1.3"/></svg><svg style="position:absolute;left:1562.0px;top:155.0px" width="20" height="20" viewBox="0 0 24 24"><path d="M3 5H21M9 5V2H15V5" stroke="#dcc8c8" stroke-width="1.6" fill="none"/><path d="M5 6L6 22H18L19 6" fill="none" stroke="#dcc8c8" stroke-width="1.6"/><path d="M9 9V19M12 9V19M15 9V19" stroke="#dcc8c8" stroke-width="1.4"/></svg><svg style="position:absolute;left:1587.0px;top:155.0px" width="20" height="20" viewBox="0 0 24 24"><path d="M1 9L17 15M1 15L17 9" stroke="#d8d8d8" stroke-width="1.4"/><circle cx="20" cy="8" r="3" fill="none" stroke="#dcc8c8" stroke-width="1.4"/><circle cx="20" cy="16" r="3" fill="none" stroke="#dcc8c8" stroke-width="1.4"/></svg><svg style="position:absolute;left:1611.0px;top:155.0px" width="20" height="20" viewBox="0 0 24 24"><path d="M8 1H17L21 5V18H8Z" fill="#fff" stroke="#d8d8d8"/><path d="M3 6H12L16 10V23H3Z" fill="#fff" stroke="#d8d8d8"/><path d="M6 14H13M6 17H13M6 20H13" stroke="#e0e0e0"/></svg><svg style="position:absolute;left:1636.0px;top:155.0px" width="20" height="20" viewBox="0 0 24 24"><rect x="3" y="3" width="18" height="20" fill="#f4f4f4" stroke="#d8d8d8"/><rect x="8" y="1" width="8" height="4" fill="#e0e0e0"/><path d="M7 10H17M7 13H17M7 16H17M7 19H17" stroke="#e0e0e0"/></svg><svg style="position:absolute;left:1670.0px;top:155.0px" width="20" height="20" viewBox="0 0 24 24"><rect x="9" y="7" width="13" height="14" fill="#f2dc3a" stroke="#b8a020" stroke-width="0.8"/><path d="M11 3.5C9 1.5 3.5 1.5 3.5 5C3.5 7 6 7.5 7.5 7.5C5 7.5 2.5 8.5 2.5 11C2.5 14 8 14.5 11 12" fill="none" stroke="#6a3a8a" stroke-width="1.8"/></svg><svg style="position:absolute;left:1695.0px;top:155.0px" width="20" height="20" viewBox="0 0 24 24"><rect x="2" y="3" width="20" height="5" rx="1.5" fill="#f2d020" stroke="#c8a010" stroke-width="0.6"/><rect x="2" y="10" width="20" height="5" rx="1.5" fill="#f2d020" stroke="#c8a010" stroke-width="0.6"/><rect x="2" y="17" width="20" height="5" rx="1.5" fill="#f2d020" stroke="#c8a010" stroke-width="0.6"/></svg><svg style="position:absolute;left:1720.0px;top:155.0px" width="20" height="20" viewBox="0 0 24 24"><rect x="2" y="2" width="20" height="20" fill="#f2d020" stroke="#888" stroke-width="0.8"/><path d="M2 2L22 22V2Z" fill="#fff"/><path d="M2 2L22 22" stroke="#555"/></svg><svg style="position:absolute;left:1745.0px;top:155.0px" width="20" height="20" viewBox="0 0 24 24"><rect x="2" y="1" width="14" height="14" fill="#f2dc3a" stroke="#b8a020" stroke-width="0.5"/><rect x="14" y="13" width="10" height="10" rx="2" fill="#e02a2a"/><circle cx="19" cy="18" r="3" fill="none" stroke="#fff" stroke-width="1.3"/><path d="M17 20L21 16" stroke="#fff" stroke-width="1.3"/></svg><svg style="position:absolute;left:1770.0px;top:155.0px" width="20" height="20" viewBox="0 0 24 24"><path d="M2 3H22L14 12V22L10 20V12Z" fill="#5b8fcc" stroke="#3a6aa0" stroke-width="0.6"/><rect x="2" y="2" width="20" height="3" fill="#f2d020"/></svg><svg style="position:absolute;left:1794.0px;top:155.0px" width="20" height="20" viewBox="0 0 24 24"><rect x="1" y="3" width="22" height="18" fill="#dde8f4" stroke="#6a98d0"/><rect x="1" y="3" width="22" height="3" fill="#6a98d0"/><path d="M12 7V20M8 11L12 7L16 11" stroke="#2a4a80" stroke-width="1.5" fill="none"/><rect x="3" y="9" width="18" height="3" fill="#f2d020" opacity="0.7"/></svg><svg style="position:absolute;left:1820.0px;top:155.0px" width="20" height="20" viewBox="0 0 24 24"><rect x="5" y="5" width="14" height="14" fill="#f2d83a" stroke="#b8a020" stroke-width="0.6"/><g fill="#4f82c4"><path d="M12 0L16.5 5H7.5Z"/><path d="M12 24L16.5 19H7.5Z"/><path d="M0 12L5 7.5V16.5Z"/><path d="M24 12L19 7.5V16.5Z"/></g><path d="M12 4V20M4 12H20" stroke="#4f82c4" stroke-width="2.5"/></svg><svg style="position:absolute;left:1845.0px;top:155.0px" width="20" height="20" viewBox="0 0 24 24"><path d="M2.5 22L8 16.5" stroke="#333" stroke-width="3.4"/><path d="M2.5 22L8 16.5" stroke="#e8c020" stroke-width="2"/><circle cx="13.5" cy="9" r="7.5" fill="#fafafa" stroke="#444" stroke-width="1.3"/><rect x="6" y="2" width="5" height="8" fill="#f2d020" opacity="0.7"/></svg><svg style="position:absolute;left:1878.0px;top:155.0px" width="20" height="20" viewBox="0 0 24 24"><rect x="2" y="4" width="16" height="16" fill="#eee" stroke="#ddd"/><path d="M12 3V22M16 3V22" stroke="#ddd" stroke-width="1.5"/><rect x="14" y="14" width="10" height="10" rx="1.5" fill="#c8c4b8"/><path d="M19 15.5V22.5M15.8 17.2L22.2 20.8M15.8 20.8L22.2 17.2" stroke="#fff" stroke-width="1.3"/></svg><div style="position:absolute;left:1531px;top:157px;width:1px;height:16px;background:#d0d0d0"></div><div style="position:absolute;left:1664px;top:157px;width:1px;height:16px;background:#d0d0d0"></div><div style="position:absolute;left:1872px;top:157px;width:1px;height:16px;background:#d0d0d0"></div><div style="position:absolute;left:1903px;top:156.46px;font-size:16px;line-height:16px;color:#000;font-weight:700;white-space:pre;">»</div><div style="position:absolute;left:1423px;top:181px;width:480px;height:484px;background:#fff;border-left:1px solid #a0a0a0;border-top:1px solid #a0a0a0"></div><div style="position:absolute;left:1424px;top:182px;width:463px;height:22px;background:linear-gradient(#fbfbfb,#ececec);border-bottom:1px solid #b4b4b4;box-sizing:border-box"></div><div style="position:absolute;left:1482px;top:182px;width:1px;height:21px;background:#d0d0d0"></div><div style="position:absolute;left:1575px;top:182px;width:1px;height:21px;background:#d0d0d0"></div><div style="position:absolute;left:1671px;top:182px;width:1px;height:21px;background:#d0d0d0"></div><div style="position:absolute;left:1762px;top:182px;width:1px;height:21px;background:#d0d0d0"></div><div style="position:absolute;left:1887px;top:182px;width:1px;height:21px;background:#d0d0d0"></div><div style="position:absolute;left:1887px;top:182px;width:15px;height:21px;background:#ececec"></div><div style="position:absolute;left:1442px;width:40px;top:186.15px;font-size:14px;line-height:14px;text-align:center;white-space:pre">id</div><div style="position:absolute;left:1482px;width:93px;top:186.15px;font-size:14px;line-height:14px;text-align:center;white-space:pre">codCampo</div><div style="position:absolute;left:1575px;width:96px;top:186.15px;font-size:14px;line-height:14px;text-align:center;white-space:pre">codSettore</div><div style="position:absolute;left:1671px;width:91px;top:186.15px;font-size:14px;line-height:14px;text-align:center;white-space:pre">codBlocco</div><div style="position:absolute;left:1762px;width:125px;top:186.15px;font-size:14px;line-height:14px;text-align:center;white-space:pre">distanza</div><div style="position:absolute;left:1424px;top:648px;width:18px;height:38px;background:linear-gradient(90deg,#fafafa,#e6e6e6)"></div><div style="position:absolute;left:1762px;top:648px;width:125px;height:38px;background:#ffc500"></div><div style="position:absolute;left:1442px;top:648px;width:320px;height:38px;background:#fff"></div><div style="position:absolute;left:1424px;top:611px;width:18px;height:38px;background:linear-gradient(90deg,#fafafa,#e6e6e6)"></div><div style="position:absolute;left:1762px;top:611px;width:125px;height:38px;background:#ffc500"></div><div style="position:absolute;left:1442px;top:611px;width:320px;height:38px;background:#e8e6e3"></div><div style="position:absolute;left:1424px;top:574px;width:18px;height:38px;background:linear-gradient(90deg,#fafafa,#e6e6e6)"></div><div style="position:absolute;left:1762px;top:574px;width:125px;height:38px;background:#ffc500"></div><div style="position:absolute;left:1442px;top:574px;width:320px;height:38px;background:#fff"></div><div style="position:absolute;left:1424px;top:537px;width:18px;height:38px;background:linear-gradient(90deg,#fafafa,#e6e6e6)"></div><div style="position:absolute;left:1762px;top:537px;width:125px;height:38px;background:#ffc500"></div><div style="position:absolute;left:1442px;top:537px;width:320px;height:38px;background:#e8e6e3"></div><div style="position:absolute;left:1424px;top:500px;width:18px;height:38px;background:linear-gradient(90deg,#fafafa,#e6e6e6)"></div><div style="position:absolute;left:1762px;top:500px;width:125px;height:38px;background:#ffc500"></div><div style="position:absolute;left:1442px;top:500px;width:320px;height:38px;background:#fff"></div><div style="position:absolute;left:1424px;top:463px;width:18px;height:38px;background:linear-gradient(90deg,#fafafa,#e6e6e6)"></div><div style="position:absolute;left:1762px;top:463px;width:125px;height:38px;background:#ffc500"></div><div style="position:absolute;left:1442px;top:463px;width:320px;height:38px;background:#e8e6e3"></div><div style="position:absolute;left:1424px;top:426px;width:18px;height:38px;background:linear-gradient(90deg,#fafafa,#e6e6e6)"></div><div style="position:absolute;left:1762px;top:426px;width:125px;height:38px;background:#ffc500"></div><div style="position:absolute;left:1442px;top:426px;width:320px;height:38px;background:#fff"></div><div style="position:absolute;left:1424px;top:389px;width:18px;height:38px;background:linear-gradient(90deg,#fafafa,#e6e6e6)"></div><div style="position:absolute;left:1762px;top:389px;width:125px;height:38px;background:#ffc500"></div><div style="position:absolute;left:1442px;top:389px;width:320px;height:38px;background:#e8e6e3"></div><div style="position:absolute;left:1424px;top:352px;width:18px;height:38px;background:linear-gradient(90deg,#fafafa,#e6e6e6)"></div><div style="position:absolute;left:1762px;top:352px;width:125px;height:38px;background:#ffc500"></div><div style="position:absolute;left:1442px;top:352px;width:320px;height:38px;background:#fff"></div><div style="position:absolute;left:1424px;top:314px;width:18px;height:38px;background:linear-gradient(90deg,#fafafa,#e6e6e6)"></div><div style="position:absolute;left:1762px;top:314px;width:125px;height:38px;background:#ffc500"></div><div style="position:absolute;left:1442px;top:314px;width:320px;height:38px;background:#e8e6e3"></div><div style="position:absolute;left:1424px;top:277px;width:18px;height:38px;background:linear-gradient(90deg,#fafafa,#e6e6e6)"></div><div style="position:absolute;left:1762px;top:277px;width:125px;height:38px;background:#ffc500"></div><div style="position:absolute;left:1442px;top:277px;width:320px;height:38px;background:#fff"></div><div style="position:absolute;left:1424px;top:240px;width:18px;height:38px;background:linear-gradient(90deg,#fafafa,#e6e6e6)"></div><div style="position:absolute;left:1762px;top:240px;width:125px;height:38px;background:#ffc500"></div><div style="position:absolute;left:1442px;top:240px;width:320px;height:38px;background:#e8e6e3"></div><div style="position:absolute;left:1424px;top:203px;width:18px;height:38px;background:linear-gradient(90deg,#fafafa,#e6e6e6)"></div><div style="position:absolute;left:1762px;top:203px;width:125px;height:38px;background:#ffc500"></div><div style="position:absolute;left:1442px;top:203px;width:320px;height:38px;background:#fff"></div><div style="position:absolute;left:1424px;top:240px;width:463px;height:1px;background:#cfcfcf"></div><div style="position:absolute;left:1426px;top:216.97px;font-size:13.5px;line-height:13.5px;color:#000;font-weight:400;white-space:pre;">1</div><div style="position:absolute;left:1442px;width:38px;top:214.55px;font-size:14px;line-height:14px;text-align:right;white-space:pre">1620</div><div style="position:absolute;left:1487px;top:214.55px;font-size:14px;line-height:14px;color:#000;font-weight:400;white-space:pre;">2</div><div style="position:absolute;left:1579px;top:214.55px;font-size:14px;line-height:14px;color:#000;font-weight:400;white-space:pre;">12A</div><div style="position:absolute;left:1675px;top:214.55px;font-size:14px;line-height:14px;color:#000;font-weight:400;white-space:pre;">0</div><div style="position:absolute;left:1762px;width:122px;top:215.40px;font-size:13px;line-height:13px;font-weight:700;text-align:right;white-space:pre;letter-spacing:-0.2px">0,000000</div><div style="position:absolute;left:1424px;top:277px;width:463px;height:1px;background:#cfcfcf"></div><div style="position:absolute;left:1426px;top:254.00px;font-size:13.5px;line-height:13.5px;color:#000;font-weight:400;white-space:pre;">2</div><div style="position:absolute;left:1442px;width:38px;top:251.58px;font-size:14px;line-height:14px;text-align:right;white-space:pre">1184</div><div style="position:absolute;left:1487px;top:251.58px;font-size:14px;line-height:14px;color:#000;font-weight:400;white-space:pre;">2</div><div style="position:absolute;left:1579px;top:251.58px;font-size:14px;line-height:14px;color:#000;font-weight:400;white-space:pre;">12A</div><div style="position:absolute;left:1675px;top:251.58px;font-size:14px;line-height:14px;color:#000;font-weight:400;white-space:pre;">0</div><div style="position:absolute;left:1762px;width:122px;top:252.43px;font-size:13px;line-height:13px;font-weight:700;text-align:right;white-space:pre;letter-spacing:-0.2px">0,088615</div><div style="position:absolute;left:1424px;top:314px;width:463px;height:1px;background:#cfcfcf"></div><div style="position:absolute;left:1426px;top:291.03px;font-size:13.5px;line-height:13.5px;color:#000;font-weight:400;white-space:pre;">3</div><div style="position:absolute;left:1442px;width:38px;top:288.61px;font-size:14px;line-height:14px;text-align:right;white-space:pre">1183</div><div style="position:absolute;left:1487px;top:288.61px;font-size:14px;line-height:14px;color:#000;font-weight:400;white-space:pre;">2</div><div style="position:absolute;left:1579px;top:288.61px;font-size:14px;line-height:14px;color:#000;font-weight:400;white-space:pre;">12A</div><div style="position:absolute;left:1675px;top:288.61px;font-size:14px;line-height:14px;color:#000;font-weight:400;white-space:pre;">0</div><div style="position:absolute;left:1762px;width:122px;top:289.46px;font-size:13px;line-height:13px;font-weight:700;text-align:right;white-space:pre;letter-spacing:-0.2px">0,177230</div><div style="position:absolute;left:1424px;top:351px;width:463px;height:1px;background:#cfcfcf"></div><div style="position:absolute;left:1426px;top:328.06px;font-size:13.5px;line-height:13.5px;color:#000;font-weight:400;white-space:pre;">4</div><div style="position:absolute;left:1442px;width:38px;top:325.64px;font-size:14px;line-height:14px;text-align:right;white-space:pre">1181</div><div style="position:absolute;left:1487px;top:325.64px;font-size:14px;line-height:14px;color:#000;font-weight:400;white-space:pre;">2</div><div style="position:absolute;left:1579px;top:325.64px;font-size:14px;line-height:14px;color:#000;font-weight:400;white-space:pre;">12A</div><div style="position:absolute;left:1675px;top:325.64px;font-size:14px;line-height:14px;color:#000;font-weight:400;white-space:pre;">0</div><div style="position:absolute;left:1762px;width:122px;top:326.49px;font-size:13px;line-height:13px;font-weight:700;text-align:right;white-space:pre;letter-spacing:-0.2px">0,265845</div><div style="position:absolute;left:1424px;top:389px;width:463px;height:1px;background:#cfcfcf"></div><div style="position:absolute;left:1426px;top:365.09px;font-size:13.5px;line-height:13.5px;color:#000;font-weight:400;white-space:pre;">5</div><div style="position:absolute;left:1442px;width:38px;top:362.67px;font-size:14px;line-height:14px;text-align:right;white-space:pre">1180</div><div style="position:absolute;left:1487px;top:362.67px;font-size:14px;line-height:14px;color:#000;font-weight:400;white-space:pre;">2</div><div style="position:absolute;left:1579px;top:362.67px;font-size:14px;line-height:14px;color:#000;font-weight:400;white-space:pre;">12A</div><div style="position:absolute;left:1675px;top:362.67px;font-size:14px;line-height:14px;color:#000;font-weight:400;white-space:pre;">0</div><div style="position:absolute;left:1762px;width:122px;top:363.52px;font-size:13px;line-height:13px;font-weight:700;text-align:right;white-space:pre;letter-spacing:-0.2px">0,354459</div><div style="position:absolute;left:1424px;top:426px;width:463px;height:1px;background:#cfcfcf"></div><div style="position:absolute;left:1426px;top:402.12px;font-size:13.5px;line-height:13.5px;color:#000;font-weight:400;white-space:pre;">6</div><div style="position:absolute;left:1442px;width:38px;top:399.70px;font-size:14px;line-height:14px;text-align:right;white-space:pre">1188</div><div style="position:absolute;left:1487px;top:399.70px;font-size:14px;line-height:14px;color:#000;font-weight:400;white-space:pre;">2</div><div style="position:absolute;left:1579px;top:399.70px;font-size:14px;line-height:14px;color:#000;font-weight:400;white-space:pre;">12A</div><div style="position:absolute;left:1675px;top:399.70px;font-size:14px;line-height:14px;color:#000;font-weight:400;white-space:pre;">0</div><div style="position:absolute;left:1762px;width:122px;top:400.55px;font-size:13px;line-height:13px;font-weight:700;text-align:right;white-space:pre;letter-spacing:-0.2px">0,443075</div><div style="position:absolute;left:1424px;top:463px;width:463px;height:1px;background:#cfcfcf"></div><div style="position:absolute;left:1426px;top:439.15px;font-size:13.5px;line-height:13.5px;color:#000;font-weight:400;white-space:pre;">7</div><div style="position:absolute;left:1442px;width:38px;top:436.73px;font-size:14px;line-height:14px;text-align:right;white-space:pre">1186</div><div style="position:absolute;left:1487px;top:436.73px;font-size:14px;line-height:14px;color:#000;font-weight:400;white-space:pre;">2</div><div style="position:absolute;left:1579px;top:436.73px;font-size:14px;line-height:14px;color:#000;font-weight:400;white-space:pre;">12A</div><div style="position:absolute;left:1675px;top:436.73px;font-size:14px;line-height:14px;color:#000;font-weight:400;white-space:pre;">0</div><div style="position:absolute;left:1762px;width:122px;top:437.58px;font-size:13px;line-height:13px;font-weight:700;text-align:right;white-space:pre;letter-spacing:-0.2px">0,531689</div><div style="position:absolute;left:1424px;top:500px;width:463px;height:1px;background:#cfcfcf"></div><div style="position:absolute;left:1426px;top:476.18px;font-size:13.5px;line-height:13.5px;color:#000;font-weight:400;white-space:pre;">8</div><div style="position:absolute;left:1442px;width:38px;top:473.76px;font-size:14px;line-height:14px;text-align:right;white-space:pre">1185</div><div style="position:absolute;left:1487px;top:473.76px;font-size:14px;line-height:14px;color:#000;font-weight:400;white-space:pre;">2</div><div style="position:absolute;left:1579px;top:473.76px;font-size:14px;line-height:14px;color:#000;font-weight:400;white-space:pre;">12A</div><div style="position:absolute;left:1675px;top:473.76px;font-size:14px;line-height:14px;color:#000;font-weight:400;white-space:pre;">0</div><div style="position:absolute;left:1762px;width:122px;top:474.61px;font-size:13px;line-height:13px;font-weight:700;text-align:right;white-space:pre;letter-spacing:-0.2px">0,620304</div><div style="position:absolute;left:1424px;top:537px;width:463px;height:1px;background:#cfcfcf"></div><div style="position:absolute;left:1426px;top:513.21px;font-size:13.5px;line-height:13.5px;color:#000;font-weight:400;white-space:pre;">9</div><div style="position:absolute;left:1442px;width:38px;top:510.79px;font-size:14px;line-height:14px;text-align:right;white-space:pre">1135</div><div style="position:absolute;left:1487px;top:510.79px;font-size:14px;line-height:14px;color:#000;font-weight:400;white-space:pre;">2</div><div style="position:absolute;left:1579px;top:510.79px;font-size:14px;line-height:14px;color:#000;font-weight:400;white-space:pre;">12A</div><div style="position:absolute;left:1675px;top:510.79px;font-size:14px;line-height:14px;color:#000;font-weight:400;white-space:pre;">0</div><div style="position:absolute;left:1762px;width:122px;top:511.64px;font-size:13px;line-height:13px;font-weight:700;text-align:right;white-space:pre;letter-spacing:-0.2px">0,708919</div><div style="position:absolute;left:1424px;top:574px;width:463px;height:1px;background:#cfcfcf"></div><div style="position:absolute;left:1426px;top:550.24px;font-size:13.5px;line-height:13.5px;color:#000;font-weight:400;white-space:pre;">10</div><div style="position:absolute;left:1442px;width:38px;top:547.82px;font-size:14px;line-height:14px;text-align:right;white-space:pre">1154</div><div style="position:absolute;left:1487px;top:547.82px;font-size:14px;line-height:14px;color:#000;font-weight:400;white-space:pre;">2</div><div style="position:absolute;left:1579px;top:547.82px;font-size:14px;line-height:14px;color:#000;font-weight:400;white-space:pre;">12A</div><div style="position:absolute;left:1675px;top:547.82px;font-size:14px;line-height:14px;color:#000;font-weight:400;white-space:pre;">0</div><div style="position:absolute;left:1762px;width:122px;top:548.67px;font-size:13px;line-height:13px;font-weight:700;text-align:right;white-space:pre;letter-spacing:-0.2px">0,797534</div><div style="position:absolute;left:1424px;top:611px;width:463px;height:1px;background:#cfcfcf"></div><div style="position:absolute;left:1426px;top:587.27px;font-size:13.5px;line-height:13.5px;color:#000;font-weight:400;white-space:pre;">11</div><div style="position:absolute;left:1442px;width:38px;top:584.85px;font-size:14px;line-height:14px;text-align:right;white-space:pre">1153</div><div style="position:absolute;left:1487px;top:584.85px;font-size:14px;line-height:14px;color:#000;font-weight:400;white-space:pre;">2</div><div style="position:absolute;left:1579px;top:584.85px;font-size:14px;line-height:14px;color:#000;font-weight:400;white-space:pre;">12A</div><div style="position:absolute;left:1675px;top:584.85px;font-size:14px;line-height:14px;color:#000;font-weight:400;white-space:pre;">0</div><div style="position:absolute;left:1762px;width:122px;top:585.70px;font-size:13px;line-height:13px;font-weight:700;text-align:right;white-space:pre;letter-spacing:-0.2px">0,886148</div><div style="position:absolute;left:1424px;top:648px;width:463px;height:1px;background:#cfcfcf"></div><div style="position:absolute;left:1426px;top:624.30px;font-size:13.5px;line-height:13.5px;color:#000;font-weight:400;white-space:pre;">12</div><div style="position:absolute;left:1442px;width:38px;top:621.88px;font-size:14px;line-height:14px;text-align:right;white-space:pre">1125</div><div style="position:absolute;left:1487px;top:621.88px;font-size:14px;line-height:14px;color:#000;font-weight:400;white-space:pre;">2</div><div style="position:absolute;left:1579px;top:621.88px;font-size:14px;line-height:14px;color:#000;font-weight:400;white-space:pre;">12A</div><div style="position:absolute;left:1675px;top:621.88px;font-size:14px;line-height:14px;color:#000;font-weight:400;white-space:pre;">0</div><div style="position:absolute;left:1762px;width:122px;top:622.73px;font-size:13px;line-height:13px;font-weight:700;text-align:right;white-space:pre;letter-spacing:-0.2px">0,974764</div><div style="position:absolute;left:1424px;top:685px;width:463px;height:1px;background:#cfcfcf"></div><div style="position:absolute;left:1426px;top:661.33px;font-size:13.5px;line-height:13.5px;color:#000;font-weight:400;white-space:pre;">13</div><div style="position:absolute;left:1442px;width:38px;top:658.91px;font-size:14px;line-height:14px;text-align:right;white-space:pre">1124</div><div style="position:absolute;left:1487px;top:658.91px;font-size:14px;line-height:14px;color:#000;font-weight:400;white-space:pre;">2</div><div style="position:absolute;left:1579px;top:658.91px;font-size:14px;line-height:14px;color:#000;font-weight:400;white-space:pre;">12A</div><div style="position:absolute;left:1675px;top:658.91px;font-size:14px;line-height:14px;color:#000;font-weight:400;white-space:pre;">0</div><div style="position:absolute;left:1762px;width:122px;top:659.76px;font-size:13px;line-height:13px;font-weight:700;text-align:right;white-space:pre;letter-spacing:-0.2px">1,063378</div><div style="position:absolute;left:1442px;top:203px;width:1px;height:462px;background:#d2d2d2"></div><div style="position:absolute;left:1482px;top:203px;width:1px;height:462px;background:#d2d2d2"></div><div style="position:absolute;left:1575px;top:203px;width:1px;height:462px;background:#d2d2d2"></div><div style="position:absolute;left:1671px;top:203px;width:1px;height:462px;background:#d2d2d2"></div><div style="position:absolute;left:1762px;top:203px;width:1px;height:462px;background:#d2d2d2"></div><div style="position:absolute;left:1887px;top:203px;width:1px;height:462px;background:#d2d2d2"></div><div style="position:absolute;left:1441px;top:203px;width:1px;height:462px;background:#c0c0c0"></div><div style="position:absolute;left:1902px;top:181px;width:18px;height:484px;background:#e4e4e4;border-left:1px solid #b8b8b8;border-top:1px solid #b8b8b8;box-sizing:border-box"></div><div style="position:absolute;left:1903px;top:182px;width:17px;height:17px;background:#f8f8f8;border-bottom:1px solid #c4c4c4;box-sizing:border-box"></div><svg style="position:absolute;left:1903px;top:184px" width="17" height="12"><path d="M4 8.5L8.5 4L13 8.5Z" fill="#555"/></svg><div style="position:absolute;left:1903px;top:199px;width:17px;height:200px;background:#f7f7f7;border-bottom:1px solid #c8c8c8;box-sizing:border-box"></div><svg style="position:absolute;left:0;top:0" width="1" height="1"><g fill="#b0b0b0"><rect x="158" y="595" width="1" height="1"/><rect x="161" y="595" width="1" height="1"/><rect x="164" y="595" width="1" height="1"/><rect x="167" y="595" width="1" height="1"/><rect x="170" y="595" width="1" height="1"/><rect x="173" y="595" width="1" height="1"/><rect x="176" y="595" width="1" height="1"/></g></svg><svg style="position:absolute;left:0;top:0" width="1" height="1"><g fill="#b0b0b0"><rect x="279" y="583" width="1" height="1"/><rect x="279" y="586" width="1" height="1"/><rect x="279" y="589" width="1" height="1"/><rect x="279" y="592" width="1" height="1"/><rect x="279" y="595" width="1" height="1"/><rect x="279" y="598" width="1" height="1"/></g></svg><svg style="position:absolute;left:0;top:0" width="1" height="1"><g fill="#b0b0b0"><rect x="1419" y="582" width="1" height="1"/><rect x="1419" y="585" width="1" height="1"/><rect x="1419" y="588" width="1" height="1"/><rect x="1419" y="591" width="1" height="1"/><rect x="1419" y="594" width="1" height="1"/><rect x="1419" y="597" width="1" height="1"/></g></svg><div style="position:absolute;left:0px;top:1048px;width:1920px;height:30px;background:#f0f0f0"></div><div style="position:absolute;left:4px;top:1051px;width:309px;height:26px;background:#fff;border:1px solid #b8b8b8;border-radius:3px;box-sizing:border-box"></div><svg style="position:absolute;left:10px;top:1056px" width="16" height="16"><circle cx="6.5" cy="6.5" r="4.5" fill="none" stroke="#777" stroke-width="1.4"/><path d="M9.8 9.8L14 14" stroke="#777" stroke-width="1.6"/></svg><div style="position:absolute;left:33px;top:1057.75px;font-size:14px;line-height:14px;color:#6e6e6e;font-weight:400;white-space:pre;">Digita per localizzare (Ctrl+K)</div><div style="position:absolute;left:321px;top:1057.75px;font-size:14px;line-height:14px;color:#000;font-weight:400;white-space:pre;">Non ci sono geometrie in questa posizione.</div><div style="position:absolute;left:834px;top:1057.75px;font-size:14px;line-height:14px;color:#000;font-weight:400;white-space:pre;">Coordinate</div><div style="position:absolute;left:906px;top:1051px;width:154px;height:26px;background:#fff;border:1px solid #b8b8b8;border-radius:3px;box-sizing:border-box"></div><div style="position:absolute;left:913px;top:1058.60px;font-size:13px;line-height:13px;color:#000;font-weight:400;white-space:pre;">2308637.96,4171119.56</div><svg style="position:absolute;left:1062px;top:1052px" width="22" height="24"><g transform="rotate(-30 11 12)"><rect x="5" y="3" width="11" height="18" rx="5.5" fill="#fff" stroke="#000" stroke-width="1.6"/><path d="M10.5 3V10M5 10H16" stroke="#000" stroke-width="1.4"/><rect x="9" y="5" width="3" height="4" rx="1" fill="#000"/></g></svg><div style="position:absolute;left:1082px;top:664px;width:838px;height:416px;background:#f0f0f0;border-left:1px solid #555;border-top:1px solid #555;box-sizing:border-box"></div><div style="position:absolute;left:1083px;top:665px;width:837px;height:37px;background:#fff"></div><svg style="position:absolute;left:1092.5px;top:673.5px" width="19" height="19" viewBox="0 0 24 24"><circle cx="11" cy="11" r="7.5" fill="none" stroke="#589632" stroke-width="4"/><path d="M14 14L21 21" stroke="#589632" stroke-width="4.5"/><circle cx="11" cy="11" r="3" fill="#ee7913"/><path d="M9 13L15 7" stroke="#f0e130" stroke-width="1.5"/></svg><div style="position:absolute;left:1117px;top:676.20px;font-size:15px;line-height:15px;color:#000;font-weight:400;white-space:pre;">Calcolatore di Campi</div><div style="position:absolute;left:1097px;top:719px;width:16px;height:16px;background:#f0f0f0;border:1px solid #c8c8c8;box-sizing:border-box"></div><div style="position:absolute;left:1119px;top:720.05px;font-size:14px;line-height:14px;color:#7a7a7a;font-weight:400;white-space:pre;">Aggiorna solo le 0 geometrie selezionate</div><div style="position:absolute;left:1097px;top:748px;width:16px;height:16px;background:#fff;border:1px solid #8a8a8a;box-sizing:border-box"></div><svg style="position:absolute;left:1097px;top:748px" width="16" height="16"><path d="M3.5 8L6.5 12L12.5 3" fill="none" stroke="#000" stroke-width="2"/></svg><div style="position:absolute;left:1119px;top:750.23px;font-size:13.2px;line-height:13.2px;color:#000;font-weight:700;white-space:pre;letter-spacing:-0.2px">Crea un nuovo campo</div><div style="position:absolute;left:1097px;top:768px;width:400px;height:124px;border:1px solid #d8d8d8;background:#ececec;box-sizing:border-box"></div><div style="position:absolute;left:1102px;top:783px;width:16px;height:16px;background:#fff;border:1px solid #8a8a8a;box-sizing:border-box"></div><div style="position:absolute;left:1125px;top:784.45px;font-size:14px;line-height:14px;color:#000;font-weight:400;white-space:pre;">Crea campo virtuale</div><div style="position:absolute;left:1102px;top:812.65px;font-size:14px;line-height:14px;color:#000;font-weight:400;white-space:pre;">Nome campo in uscita</div><div style="position:absolute;left:1271px;top:806px;width:220px;height:26px;background:#fff;border:1px solid #b0b0b0;border-radius:2px;box-sizing:border-box"></div><div style="position:absolute;left:1274px;top:812.65px;font-size:14px;line-height:14px;color:#000;font-weight:400;white-space:pre;">distanza</div><div style="position:absolute;left:1102px;top:841.35px;font-size:14px;line-height:14px;color:#000;font-weight:400;white-space:pre;">Tipo campo in uscita</div><div style="position:absolute;left:1271px;top:836px;width:220px;height:25px;background:linear-gradient(#fdfdfd,#f0f0f0);border:1px solid #b8b8b8;border-radius:2px;box-sizing:border-box"></div><div style="position:absolute;left:1276px;top:841.35px;font-size:14px;line-height:14px;color:#000;font-weight:400;white-space:pre;">Numero decimale (real)</div><svg style="position:absolute;left:1466px;top:842px" width="16" height="12"><path d="M3 4L13 4L8 9Z" fill="#444"/></svg><div style="position:absolute;left:1102px;top:870.35px;font-size:14px;line-height:14px;color:#000;font-weight:400;white-space:pre;">Lunghezza campo in uscita</div><div style="position:absolute;left:1271px;top:865px;width:70px;height:25px;background:#fff;border:1px solid #b8b8b8;border-radius:2px;box-sizing:border-box"></div><div style="position:absolute;left:1321px;top:866px;width:19px;height:23px;background:#f4f4f4;border-left:1px solid #d0d0d0;box-sizing:border-box"></div><div style="position:absolute;left:1276px;top:870.35px;font-size:14px;line-height:14px;color:#000;font-weight:400;white-space:pre;">10</div><div style="position:absolute;left:1347px;top:870.35px;font-size:14px;line-height:14px;color:#000;font-weight:400;white-space:pre;">Precisione</div><div style="position:absolute;left:1422px;top:865px;width:69px;height:25px;background:#fff;border:1px solid #b8b8b8;border-radius:2px;box-sizing:border-box"></div><div style="position:absolute;left:1471px;top:866px;width:19px;height:23px;background:#f4f4f4;border-left:1px solid #d0d0d0;box-sizing:border-box"></div><div style="position:absolute;left:1427px;top:870.35px;font-size:14px;line-height:14px;color:#000;font-weight:400;white-space:pre;">6</div><svg style="position:absolute;left:1321px;top:866px" width="19" height="23"><path d="M5 9L9.5 4L14 9Z" fill="#444"/><path d="M5 14L9.5 19L14 14Z" fill="#888"/></svg><svg style="position:absolute;left:1471px;top:866px" width="19" height="23"><path d="M5 9L9.5 4L14 9Z" fill="#444"/><path d="M5 14L9.5 19L14 14Z" fill="#888"/></svg><div style="position:absolute;left:1505px;top:748px;width:16px;height:16px;background:#fff;border:1px solid #8a8a8a;box-sizing:border-box"></div><div style="position:absolute;left:1527px;top:750.23px;font-size:13.2px;line-height:13.2px;color:#000;font-weight:700;white-space:pre;letter-spacing:-0.2px">Aggiorna un campo esistente</div><div style="position:absolute;left:1505px;top:768px;width:420px;height:124px;border:1px solid #d8d8d8;background:#ececec;box-sizing:border-box"></div><div style="position:absolute;left:1510px;top:821px;width:415px;height:26px;background:linear-gradient(#fafafa,#ededed);border:1px solid #c0c0c0;border-radius:3px;box-sizing:border-box"></div><div style="position:absolute;left:1097px;top:932px;width:823px;height:148px;background:#f0f0f0;border-top:1px solid #d0d0d0;box-sizing:border-box"></div><div style="position:absolute;left:1097px;top:901px;width:104px;height:32px;background:#fff;border:1px solid #c8c8c8;border-bottom:none;border-radius:2px 2px 0 0;box-sizing:border-box"></div><div style="position:absolute;left:1111px;top:910.65px;font-size:14px;line-height:14px;color:#000;font-weight:400;white-space:pre;">Espressione</div><div style="position:absolute;left:1200px;top:903px;width:156px;height:30px;background:#e8e8e8;border:1px solid #c8c8c8;border-bottom:none;border-radius:2px 2px 0 0;box-sizing:border-box"></div><div style="position:absolute;left:1215px;top:910.65px;font-size:14px;line-height:14px;color:#000;font-weight:400;white-space:pre;">Editor delle funzioni</div><div style="position:absolute;left:1097px;top:933px;width:823px;height:147px;background:#f0f0f0"></div><div style="position:absolute;left:1108px;top:955px;width:27px;height:26px;box-sizing:border-box;border:1px solid #bdbdbd;border-radius:3px;background:linear-gradient(#fdfdfd,#ececec);font-size:14px;line-height:25px;text-align:center;color:#000">=</div><div style="position:absolute;left:1139px;top:955px;width:27px;height:26px;box-sizing:border-box;border:1px solid #bdbdbd;border-radius:3px;background:linear-gradient(#fdfdfd,#ececec);font-size:14px;line-height:25px;text-align:center;color:#000">+</div><div style="position:absolute;left:1168px;top:955px;width:27px;height:26px;box-sizing:border-box;border:1px solid #bdbdbd;border-radius:3px;background:linear-gradient(#fdfdfd,#ececec);font-size:14px;line-height:25px;text-align:center;color:#000">-</div><div style="position:absolute;left:1198px;top:955px;width:27px;height:26px;box-sizing:border-box;border:1px solid #bdbdbd;border-radius:3px;background:linear-gradient(#fdfdfd,#ececec);font-size:14px;line-height:25px;text-align:center;color:#000">/</div><div style="position:absolute;left:1228px;top:955px;width:27px;height:26px;box-sizing:border-box;border:1px solid #bdbdbd;border-radius:3px;background:linear-gradient(#fdfdfd,#ececec);font-size:14px;line-height:25px;text-align:center;color:#000">*</div><div style="position:absolute;left:1259px;top:955px;width:27px;height:26px;box-sizing:border-box;border:1px solid #bdbdbd;border-radius:3px;background:linear-gradient(#fdfdfd,#ececec);font-size:14px;line-height:25px;text-align:center;color:#000">^</div><div style="position:absolute;left:1290px;top:955px;width:27px;height:26px;box-sizing:border-box;border:1px solid #bdbdbd;border-radius:3px;background:linear-gradient(#fdfdfd,#ececec);font-size:14px;line-height:25px;text-align:center;color:#000">||</div><div style="position:absolute;left:1320px;top:955px;width:27px;height:26px;box-sizing:border-box;border:1px solid #bdbdbd;border-radius:3px;background:linear-gradient(#fdfdfd,#ececec);font-size:14px;line-height:25px;text-align:center;color:#000">(</div><div style="position:absolute;left:1349px;top:955px;width:27px;height:26px;box-sizing:border-box;border:1px solid #bdbdbd;border-radius:3px;background:linear-gradient(#fdfdfd,#ececec);font-size:14px;line-height:25px;text-align:center;color:#000">)</div><div style="position:absolute;left:1379px;top:955px;width:27px;height:26px;box-sizing:border-box;border:1px solid #bdbdbd;border-radius:3px;background:linear-gradient(#fdfdfd,#ececec);font-size:14px;line-height:25px;text-align:center;color:#000">&#x27;\n&#x27;</div><div style="position:absolute;left:1107px;top:989px;width:639px;height:91px;background:#fff;border:1px solid #b8b8b8;border-bottom:none;box-sizing:border-box"></div><div style="position:absolute;left:1114px;top:991.76px;font-size:17.3px;line-height:17.3px;color:#000;font-weight:400;white-space:pre;"><span style="color:#3ea6b8">length</span><span style="background:#a6f000;color:#1a1aa6">(</span><span style="color:#3ea6b8">shortest_line</span><span style="color:#5b87c9">(</span> <span style="color:#000">$</span><span style="color:#3ea6b8">geometry</span><span style="color:#3ea6b8">,</span>  <span style="color:#3ea6b8">geometry</span> <span style="color:#5b87c9">(</span> <span style="color:#3ea6b8">get_feature_by_id</span><span style="color:#5b87c9">(</span> <span style="color:#9a9a10">'linea'</span><span style="color:#3ea6b8">,</span> <span style="color:#c8283c">1</span><span style="color:#5b87c9">)))</span><span style="background:#a6f000;color:#1a1aa6">)</span></div><div style="position:absolute;left:1771px;top:944px;width:160px;height:26px;background:#fff;border:1px solid #c0c0c0;border-radius:3px;box-sizing:border-box"></div><svg style="position:absolute;left:1778px;top:948px" width="16" height="16"><circle cx="6.5" cy="6.5" r="4.5" fill="none" stroke="#777" stroke-width="1.4"/><path d="M9.8 9.8L14 14" stroke="#777" stroke-width="1.6"/></svg><div style="position:absolute;left:1800px;top:950.65px;font-size:14px;line-height:14px;color:#808080;font-weight:400;white-space:pre;">Cerca...</div><div style="position:absolute;left:1771px;top:978px;width:160px;height:102px;background:#fff;border:1px solid #c0c0c0;box-sizing:border-box"></div><div style="position:absolute;left:1797px;top:979px;width:123px;height:101px;background:#e9e9e9"></div><svg style="position:absolute;left:1779px;top:981.7px" width="10" height="12"><path d="M2 1L8 6L2 11Z" fill="#333"/></svg><div style="position:absolute;left:1800px;top:981.27px;font-size:13.5px;line-height:13.5px;color:#000;font-weight:400;white-space:pre;">Generale</div><svg style="position:absolute;left:1779px;top:999.7px" width="10" height="12"><path d="M2 1L8 6L2 11Z" fill="#333"/></svg><div style="position:absolute;left:1800px;top:999.27px;font-size:13.5px;line-height:13.5px;color:#000;font-weight:400;white-space:pre;">Geometria</div><svg style="position:absolute;left:1779px;top:1017.7px" width="10" height="12"><path d="M2 1L8 6L2 11Z" fill="#333"/></svg><div style="position:absolute;left:1800px;top:1017.27px;font-size:13.5px;line-height:13.5px;color:#000;font-weight:400;white-space:pre;">Ibama</div><svg style="position:absolute;left:1779px;top:1035.7px" width="10" height="12"><path d="M2 1L8 6L2 11Z" fill="#333"/></svg><div style="position:absolute;left:1800px;top:1035.27px;font-size:13.5px;line-height:13.5px;color:#000;font-weight:400;white-space:pre;">Layer della mappa</div><svg style="position:absolute;left:1779px;top:1053.7px" width="10" height="12"><path d="M2 1L8 6L2 11Z" fill="#333"/></svg><div style="position:absolute;left:1800px;top:1053.27px;font-size:13.5px;line-height:13.5px;color:#000;font-weight:400;white-space:pre;">Layer della Mappa</div><svg style="position:absolute;left:1779px;top:1071.7px" width="10" height="12"><path d="M2 1L8 6L2 11Z" fill="#333"/></svg><div style="position:absolute;left:1800px;top:1071.27px;font-size:13.5px;line-height:13.5px;color:#000;font-weight:400;white-space:pre;">Mappe</div><svg style="position:absolute;left:0;top:0" width="1" height="1"><g fill="#b0b0b0"><rect x="1757" y="1040" width="1" height="1"/><rect x="1757" y="1043" width="1" height="1"/><rect x="1757" y="1046" width="1" height="1"/><rect x="1757" y="1049" width="1" height="1"/><rect x="1757" y="1052" width="1" height="1"/><rect x="1757" y="1055" width="1" height="1"/><rect x="1757" y="1058" width="1" height="1"/><rect x="1757" y="1061" width="1" height="1"/><rect x="1757" y="1064" width="1" height="1"/><rect x="1757" y="1067" width="1" height="1"/><rect x="1757" y="1070" width="1" height="1"/></g></svg><div style="position:absolute;left:0px;top:1078px;width:1920px;height:2px;background:#3a3a3a"></div><svg style="position:absolute;left:0;top:0" width="1920" height="1080"><path d="M1786,199.5 C1662.2,395.3 1459.9,761.4 1384,808" fill="none" stroke="#e81c24" stroke-width="2.8"/><circle cx="1786" cy="199.5" r="6" fill="#e81c24"/><polygon points="1373.2,818.5 1385.3,796.9 1387,806.5 1395.5,807.1" fill="#e81c24"/></svg></body></html>
